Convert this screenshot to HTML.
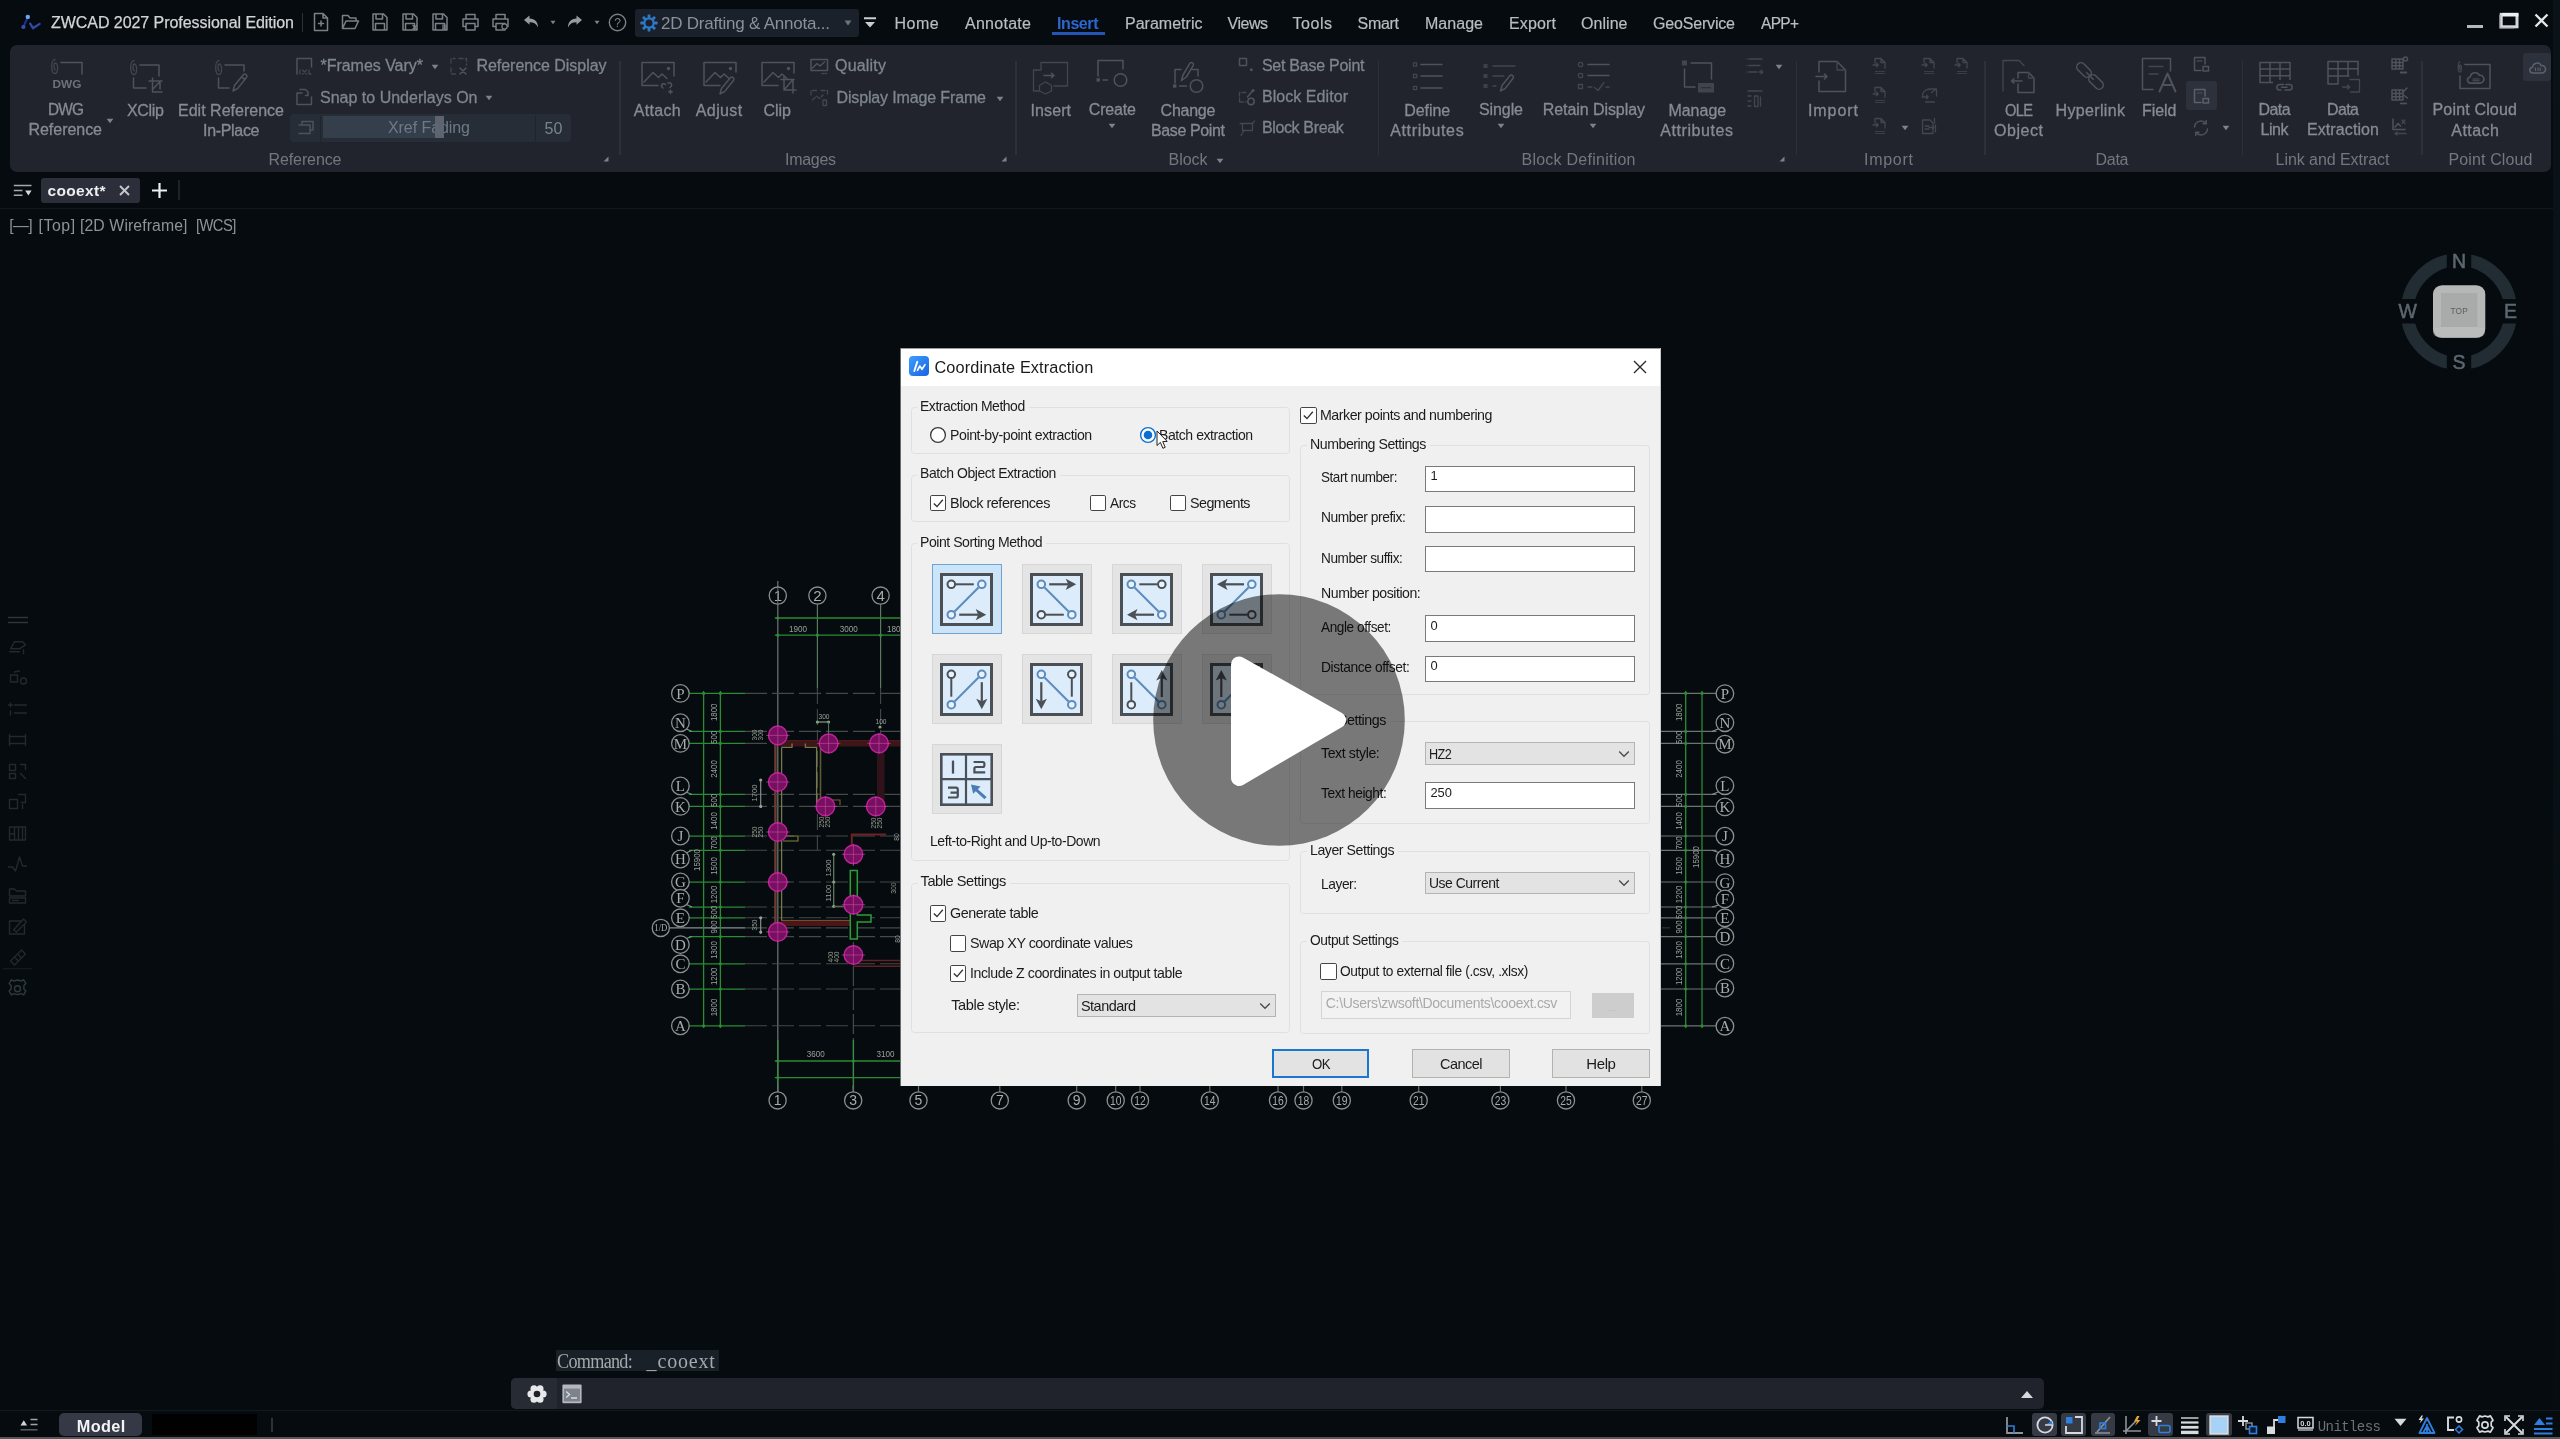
<!DOCTYPE html>
<html><head><meta charset="utf-8"><title>ZWCAD</title>
<style>
html,body{margin:0;padding:0;background:#050b0e;}
body{width:2560px;height:1439px;background:#050b0e;position:relative;overflow:hidden;font-family:"Liberation Sans",sans-serif;}
.t{position:absolute;white-space:pre;}
.b{position:absolute;}
svg{overflow:visible;}
#all{position:absolute;left:0;top:0;width:2560px;height:1439px;filter:blur(.4px);}
</style></head><body><div id="all">
<svg class="b" style="left:20.00px;top:12.00px;" width="22" height="22" viewBox="0 0 22 22"><path d="M7.3 6.2 L3.9 13.8" stroke="#1f2e90" stroke-width="2.1" fill="none" stroke-linecap="round"/><circle cx="3.4" cy="15" r="2.1" fill="#3c4db0"/><path d="M10.2 11.6 L13 16.2 L19.6 11.9" stroke="#3447aa" stroke-width="2.3" fill="none" stroke-linecap="round" stroke-linejoin="round"/><circle cx="7.8" cy="4.9" r="2.2" fill="#6ea8ea"/></svg>
<span class="t" style="left:51.00px;top:15.48px;font-size:16.00px;line-height:1;color:#d2d4d6;letter-spacing:-0.052px;-webkit-text-stroke-width:.25px;">ZWCAD 2027 Professional Edition</span>
<div class="b" style="left:301.50px;top:13.00px;width:1.20px;height:19.00px;background:#2c3136;"></div>
<svg class="b" style="left:312.00px;top:12.00px;" width="18" height="20" viewBox="0 0 18 20"><path d="M2.5 1.5 H11 L15.5 6 V18.5 H2.5 Z M11 1.5 V6 H15.5" fill="none" stroke="#7b8087" stroke-width="1.5" stroke-linejoin="round" stroke-linecap="round"/><path d="M9 9 V14 M6.5 11.5 H11.5" fill="none" stroke="#7b8087" stroke-width="1.5" stroke-linejoin="round" stroke-linecap="round"/></svg>
<svg class="b" style="left:340.50px;top:12.00px;" width="19" height="20" viewBox="0 0 19 20"><path d="M1.5 16.5 V3.5 H7 L9 6 H15 V9 M1.5 16.5 L5 9 H17.5 L14 16.5 Z" fill="none" stroke="#7b8087" stroke-width="1.5" stroke-linejoin="round" stroke-linecap="round"/></svg>
<svg class="b" style="left:371.00px;top:12.00px;" width="18" height="20" viewBox="0 0 18 20"><path d="M2 2 H12.5 L16 5.5 V18 H2 Z M5 2 V7 H11.5 V2 M4.5 18 V11.5 H13.5 V18" fill="none" stroke="#7b8087" stroke-width="1.5" stroke-linejoin="round" stroke-linecap="round"/></svg>
<svg class="b" style="left:401.00px;top:12.00px;" width="18" height="20" viewBox="0 0 18 20"><path d="M2 2 H12.5 L16 5.5 V18 H2 Z M5 2 V7 H11.5 V2 M4.5 18 V11.5 H13.5 V18" fill="none" stroke="#7b8087" stroke-width="1.5" stroke-linejoin="round" stroke-linecap="round"/><path d="M11.5 13 l4.5 4.5 M16 13 l-4.5 4.5" stroke="#7b8087" stroke-width="1.3"/></svg>
<svg class="b" style="left:431.00px;top:12.00px;" width="18" height="20" viewBox="0 0 18 20"><path d="M2 2 H12.5 L16 5.5 V18 H2 Z M5 2 V7 H11.5 V2 M4.5 18 V11.5 H13.5 V18" fill="none" stroke="#7b8087" stroke-width="1.5" stroke-linejoin="round" stroke-linecap="round"/><path d="M12 12.5 v5.5 M15 12.5 v5.5" stroke="#7b8087" stroke-width="1.3"/></svg>
<svg class="b" style="left:460.50px;top:12.00px;" width="19" height="20" viewBox="0 0 19 20"><path d="M5 7 V2.5 H14 V7 M5 14.5 H2 V7 H17 V14.5 H14 M5 11.5 H14 V18 H5 Z" fill="none" stroke="#7b8087" stroke-width="1.5" stroke-linejoin="round" stroke-linecap="round"/></svg>
<svg class="b" style="left:490.50px;top:12.00px;" width="19" height="20" viewBox="0 0 19 20"><path d="M5 7 V2.5 H14 V7 M5 14.5 H2 V7 H17 V14.5 H14 M5 11.5 H14 V18 H5 Z" fill="none" stroke="#7b8087" stroke-width="1.5" stroke-linejoin="round" stroke-linecap="round"/><circle cx="13.5" cy="14.5" r="2.6" fill="#050b0e" stroke="#7b8087" stroke-width="1.2"/></svg>
<svg class="b" style="left:522.00px;top:12.00px;" width="18" height="20" viewBox="0 0 18 20"><path d="M2 8 L7.5 3.5 V6.5 C13 6.5 16 10 16 15.5 C14.5 12 12 10.3 7.5 10.3 V12.8 Z" fill="#959aa0"/></svg>
<svg class="b" style="left:550.00px;top:20.00px;" width="6" height="5" viewBox="0 0 6 5"><path d="M.5 .8 H5.5 L3 4.2 Z" fill="#7d838a"/></svg>
<svg class="b" style="left:566.00px;top:12.00px;" width="18" height="20" viewBox="0 0 18 20"><path d="M16 8 L10.5 3.5 V6.5 C5 6.5 2 10 2 15.5 C3.5 12 6 10.3 10.5 10.3 V12.8 Z" fill="#959aa0"/></svg>
<svg class="b" style="left:594.00px;top:20.00px;" width="6" height="5" viewBox="0 0 6 5"><path d="M.5 .8 H5.5 L3 4.2 Z" fill="#7d838a"/></svg>
<svg class="b" style="left:608.00px;top:13.00px;" width="19" height="19" viewBox="0 0 19 19"><circle cx="9.5" cy="9.5" r="8.2" fill="none" stroke="#7b8087" stroke-width="1.4"/><text x="9.5" y="14" font-family="Liberation Sans" font-size="12" text-anchor="middle" fill="#7b8087">?</text></svg>
<div class="b" style="left:635.00px;top:9.00px;width:224.00px;height:28.00px;background:#1a212a;border-radius:3px;"></div>
<svg class="b" style="left:640.00px;top:14.00px;" width="18" height="18" viewBox="0 0 18 18"><g transform="translate(9 9)"><rect x="-1.4" y="-8.6" width="2.8" height="4" rx=".6" fill="#2f78c8" transform="rotate(0)"/><rect x="-1.4" y="-8.6" width="2.8" height="4" rx=".6" fill="#2f78c8" transform="rotate(45)"/><rect x="-1.4" y="-8.6" width="2.8" height="4" rx=".6" fill="#2f78c8" transform="rotate(90)"/><rect x="-1.4" y="-8.6" width="2.8" height="4" rx=".6" fill="#2f78c8" transform="rotate(135)"/><rect x="-1.4" y="-8.6" width="2.8" height="4" rx=".6" fill="#2f78c8" transform="rotate(180)"/><rect x="-1.4" y="-8.6" width="2.8" height="4" rx=".6" fill="#2f78c8" transform="rotate(225)"/><rect x="-1.4" y="-8.6" width="2.8" height="4" rx=".6" fill="#2f78c8" transform="rotate(270)"/><rect x="-1.4" y="-8.6" width="2.8" height="4" rx=".6" fill="#2f78c8" transform="rotate(315)"/><circle r="4.6" fill="none" stroke="#2f78c8" stroke-width="2.1"/></g></svg>
<span class="t" style="left:661.00px;top:15.40px;font-size:17.00px;line-height:1;color:#8a9199;letter-spacing:-0.222px;">2D Drafting &amp; Annota...</span>
<svg class="b" style="left:843.00px;top:19.00px;" width="10" height="8" viewBox="0 0 10 8"><path d="M1.5 1.5 L8.5 1.5 L5 6.5 Z" fill="#6d747c"/></svg>
<svg class="b" style="left:863.00px;top:15.00px;" width="14" height="14" viewBox="0 0 14 14"><path d="M1 3.2 H13 M1 3.2 H13" stroke="#c9cdd1" stroke-width="2"/><path d="M2 7 H12 L7 12.5 Z" fill="#c9cdd1"/></svg>
<span class="t" style="left:894.50px;top:15.58px;font-size:16.00px;line-height:1;color:#b9bdc1;letter-spacing:0.504px;-webkit-text-stroke-width:.2px;">Home</span>
<span class="t" style="left:965.00px;top:15.58px;font-size:16.00px;line-height:1;color:#b9bdc1;letter-spacing:0.277px;-webkit-text-stroke-width:.2px;">Annotate</span>
<span class="t" style="left:1125.00px;top:15.58px;font-size:16.00px;line-height:1;color:#b9bdc1;letter-spacing:0.016px;-webkit-text-stroke-width:.2px;">Parametric</span>
<span class="t" style="left:1227.50px;top:15.58px;font-size:16.00px;line-height:1;color:#b9bdc1;letter-spacing:-0.473px;-webkit-text-stroke-width:.2px;">Views</span>
<span class="t" style="left:1292.50px;top:15.58px;font-size:16.00px;line-height:1;color:#b9bdc1;letter-spacing:0.535px;-webkit-text-stroke-width:.2px;">Tools</span>
<span class="t" style="left:1357.50px;top:15.58px;font-size:16.00px;line-height:1;color:#b9bdc1;letter-spacing:-0.293px;-webkit-text-stroke-width:.2px;">Smart</span>
<span class="t" style="left:1425.00px;top:15.58px;font-size:16.00px;line-height:1;color:#b9bdc1;letter-spacing:0.034px;-webkit-text-stroke-width:.2px;">Manage</span>
<span class="t" style="left:1509.00px;top:15.58px;font-size:16.00px;line-height:1;color:#b9bdc1;letter-spacing:0.150px;-webkit-text-stroke-width:.2px;">Export</span>
<span class="t" style="left:1581.00px;top:15.58px;font-size:16.00px;line-height:1;color:#b9bdc1;letter-spacing:0.050px;-webkit-text-stroke-width:.2px;">Online</span>
<span class="t" style="left:1653.00px;top:15.58px;font-size:16.00px;line-height:1;color:#b9bdc1;letter-spacing:-0.177px;-webkit-text-stroke-width:.2px;">GeoService</span>
<span class="t" style="left:1761.00px;top:15.58px;font-size:16.00px;line-height:1;color:#b9bdc1;letter-spacing:-0.724px;transform-origin:left center;transform:scaleX(0.9697);-webkit-text-stroke-width:.2px;">APP+</span>
<span class="t" style="left:1057.00px;top:15.58px;font-size:16.00px;line-height:1;color:#2c67cf;font-weight:700;letter-spacing:-0.416px;">Insert</span>
<div class="b" style="left:1052.00px;top:32.40px;width:52.50px;height:2.30px;background:#2455b6;"></div>
<div class="b" style="left:2467.30px;top:25.20px;width:15.60px;height:2.70px;background:#b4b8bb;"></div>
<svg class="b" style="left:2499.00px;top:11.50px;" width="20" height="17" viewBox="0 0 20 17"><rect x="2.2" y="2.4" width="15.8" height="12.4" fill="none" stroke="#d6d9db" stroke-width="3"/><rect x="3.4" y=".9" width="16" height="3.6" fill="#eef0f1"/><path d="M.9 3 V16 H15" stroke="#9da2a6" stroke-width="1.2" fill="none"/></svg>
<svg class="b" style="left:2534.00px;top:13.00px;" width="15" height="15" viewBox="0 0 15 15"><path d="M1.5 1.5 L13.5 13.5 M13.5 1.5 L1.5 13.5" stroke="#e4e6e8" stroke-width="2.3"/></svg>
<div class="b" style="left:10.00px;top:44.50px;width:2541.00px;height:127.00px;background:#21242c;border-radius:7px;"></div>
<svg class="b" style="left:50.00px;top:58.00px;" width="34" height="34" viewBox="0 0 34 34"><path d="M5 1.5 C.6 1.5 .6 15.5 5 15.5 C8.4 15.5 8.4 5 5.4 5 C3.6 5 3.6 11.8 5.4 11.8" fill="none" stroke="#41464f" stroke-width="1.3" stroke-linejoin="round" stroke-linecap="round"/><path d="M11 4.5 H32 V16" fill="none" stroke="#4d525b" stroke-width="1.5" stroke-linejoin="round" stroke-linecap="round"/><text x="17" y="30" font-family="Liberation Sans" font-weight="700" font-size="11.5" text-anchor="middle" fill="#6d727a" textLength="29" lengthAdjust="spacingAndGlyphs">DWG</text></svg>
<span class="t" style="left:47.50px;top:101.98px;font-size:16.00px;line-height:1;color:#868b92;letter-spacing:-0.913px;transform-origin:left center;transform:scaleX(0.9656);-webkit-text-stroke-width:.3px;">DWG</span>
<span class="t" style="left:28.50px;top:122.38px;font-size:16.00px;line-height:1;color:#868b92;letter-spacing:-0.041px;-webkit-text-stroke-width:.3px;">Reference</span>
<svg class="b" style="left:105.80px;top:118.00px;" width="8" height="6" viewBox="0 0 8 6"><path d="M.6 .8 H7.4 L4 5.2 Z" fill="#7d838b"/></svg>
<svg class="b" style="left:129.00px;top:59.00px;" width="34" height="36" viewBox="0 0 34 36"><path d="M5 1.5 C.6 1.5 .6 15.5 5 15.5 C8.4 15.5 8.4 5 5.4 5 C3.6 5 3.6 11.8 5.4 11.8" fill="none" stroke="#41464f" stroke-width="1.3" stroke-linejoin="round" stroke-linecap="round"/><path d="M11 6 H30 V17 M4.5 19 V29 H17" fill="none" stroke="#4d525b" stroke-width="1.5" stroke-linejoin="round" stroke-linecap="round"/><path d="M20 22 H33 M23.5 19 V33 H33 M31 22 V30 M23.5 30.5 L31 22.5" fill="none" stroke="#4d525b" stroke-width="1.5" stroke-linejoin="round" stroke-linecap="round"/></svg>
<span class="t" style="left:127.00px;top:102.78px;font-size:16.00px;line-height:1;color:#868b92;letter-spacing:-0.309px;-webkit-text-stroke-width:.3px;">XClip</span>
<svg class="b" style="left:214.00px;top:59.00px;" width="35" height="36" viewBox="0 0 35 36"><path d="M5 1.5 C.6 1.5 .6 15.5 5 15.5 C8.4 15.5 8.4 5 5.4 5 C3.6 5 3.6 11.8 5.4 11.8" fill="none" stroke="#41464f" stroke-width="1.3" stroke-linejoin="round" stroke-linecap="round"/><path d="M11 6 H30 V12 M4.5 19 V29 H15" fill="none" stroke="#4d525b" stroke-width="1.5" stroke-linejoin="round" stroke-linecap="round"/><path d="M19 32 L20.5 26.5 L29.5 15.5 C31 14 34 16.5 32.6 18.2 L23.8 29.4 Z M27.6 17.8 L30.8 20.4" fill="none" stroke="#4d525b" stroke-width="1.5" stroke-linejoin="round" stroke-linecap="round"/></svg>
<span class="t" style="left:178.00px;top:102.78px;font-size:16.00px;line-height:1;color:#868b92;letter-spacing:0.012px;-webkit-text-stroke-width:.3px;">Edit Reference</span>
<span class="t" style="left:203.00px;top:123.18px;font-size:16.00px;line-height:1;color:#868b92;letter-spacing:-0.315px;-webkit-text-stroke-width:.3px;">In-Place</span>
<svg class="b" style="left:296.00px;top:57.00px;" width="17" height="19" viewBox="0 0 17 19"><path d="M1 17 V1.5 H15.5 V10" fill="none" stroke="#4d525b" stroke-width="1.5" stroke-linejoin="round" stroke-linecap="round"/><path d="M4 13 v4 M6.5 13 l4 4 M10.5 13 l-4 4 M13 13 v4 h2" fill="none" stroke="#41464f" stroke-width="1.3" stroke-linejoin="round" stroke-linecap="round"/></svg>
<span class="t" style="left:320.50px;top:58.48px;font-size:16.00px;line-height:1;color:#7e858d;letter-spacing:-0.029px;-webkit-text-stroke-width:.3px;">*Frames Vary*</span>
<svg class="b" style="left:431.00px;top:64.00px;" width="8" height="6" viewBox="0 0 8 6"><path d="M.6 .8 H7.4 L4 5.2 Z" fill="#7d838b"/></svg>
<svg class="b" style="left:450.00px;top:57.00px;" width="18" height="19" viewBox="0 0 18 19"><path d="M1 6 V1.5 H5 M9 1.5 H16.5 V8 M1 11 V17 H7" stroke-dasharray="4 2.5" fill="none" stroke="#41464f" stroke-width="1.3" stroke-linejoin="round" stroke-linecap="round"/><path d="M10 11 l6 6 M16 11 l-6 6" fill="none" stroke="#4d525b" stroke-width="1.5" stroke-linejoin="round" stroke-linecap="round"/></svg>
<span class="t" style="left:476.50px;top:57.98px;font-size:16.00px;line-height:1;color:#7e858d;letter-spacing:-0.046px;-webkit-text-stroke-width:.3px;">Reference Display</span>
<svg class="b" style="left:296.00px;top:88.00px;" width="17" height="18" viewBox="0 0 17 18"><path d="M1 5 V16.5 H15.5 V9 M1 5 H6 M4 1.5 H9.5 L12 4 V7.5 H9.5" fill="none" stroke="#4d525b" stroke-width="1.5" stroke-linejoin="round" stroke-linecap="round"/></svg>
<span class="t" style="left:320.00px;top:89.98px;font-size:16.00px;line-height:1;color:#7e858d;letter-spacing:0.004px;-webkit-text-stroke-width:.3px;">Snap to Underlays On</span>
<svg class="b" style="left:485.00px;top:95.00px;" width="8" height="6" viewBox="0 0 8 6"><path d="M.6 .8 H7.4 L4 5.2 Z" fill="#7d838b"/></svg>
<div class="b" style="left:290.30px;top:113.80px;width:280.70px;height:28.40px;background:#272d37;border-radius:4px;"></div>
<div class="b" style="left:323.00px;top:115.80px;width:111.50px;height:22.50px;background:#353e4b;"></div>
<div class="b" style="left:434.50px;top:116.30px;width:9.50px;height:22.00px;background:#5d6470;border-radius:1px;"></div>
<div class="b" style="left:320.00px;top:114.50px;width:1.00px;height:27.00px;background:#20252d;"></div>
<div class="b" style="left:534.60px;top:114.50px;width:1.00px;height:27.00px;background:#20252d;"></div>
<svg class="b" style="left:298.00px;top:120.00px;" width="16" height="15" viewBox="0 0 16 15"><path d="M4 3.5 V1.5 H15 V10 H13 M1 5 H12 V13.5 H1" fill="none" stroke="#4d525b" stroke-width="1.5" stroke-linejoin="round" stroke-linecap="round"/></svg>
<span class="t" style="left:388.00px;top:120.38px;font-size:16.00px;line-height:1;color:#6d7a88;letter-spacing:-0.072px;">Xref Fading</span>
<span class="t" style="left:544.60px;top:120.58px;font-size:16.00px;line-height:1;color:#7a838d;letter-spacing:-0.097px;">50</span>
<div class="b" style="left:434.50px;top:116.30px;width:9.50px;height:22.00px;background:rgba(93,100,112,.85);border-radius:1px;"></div>
<span class="t" style="left:268.50px;top:151.78px;font-size:16.00px;line-height:1;color:#73787f;letter-spacing:-0.104px;">Reference</span>
<svg class="b" style="left:603.00px;top:156.00px;" width="6" height="6" viewBox="0 0 6 6"><path d="M5.5 .5 V5.5 H.5 Z" fill="#7d838b"/></svg>
<div class="b" style="left:619.40px;top:61.00px;width:1.30px;height:94.00px;background:#2c3038;"></div>
<svg class="b" style="left:641.00px;top:61.00px;" width="36" height="32" viewBox="0 0 36 32"><path d="M1 1.5 H33 V15 M1 1.5 V24.5 H17 M3 21 L12 11.5 L17.5 16.5 L21 13 L26 17.5" fill="none" stroke="#4d525b" stroke-width="1.5" stroke-linejoin="round" stroke-linecap="round"/><circle cx="27.5" cy="7.5" r="1.7" fill="#4d525b"/><path d="M24.5 23.5 C21 21 19 25 22 27 M27 22 C30.5 21 32 24.5 29 26.5 M29.5 29 v3.5 M27.7 30.7 h3.6" fill="none" stroke="#4d525b" stroke-width="1.5" stroke-linejoin="round" stroke-linecap="round"/></svg>
<span class="t" style="left:633.80px;top:102.78px;font-size:16.00px;line-height:1;color:#868b92;letter-spacing:0.288px;-webkit-text-stroke-width:.3px;">Attach</span>
<svg class="b" style="left:702.50px;top:61.00px;" width="36" height="34" viewBox="0 0 36 34"><path d="M1 1.5 H33 V11 M1 1.5 V24.5 H17 M3 21 L12 11.5 L17.5 16.5 L21 13 L26 17.5" fill="none" stroke="#4d525b" stroke-width="1.5" stroke-linejoin="round" stroke-linecap="round"/><circle cx="27.5" cy="7.5" r="1.7" fill="#4d525b"/><path d="M17 33 L18.5 27.5 L27.5 16.5 C29 15 32 17.5 30.6 19.2 L21.8 30.4 Z" fill="none" stroke="#4d525b" stroke-width="1.5" stroke-linejoin="round" stroke-linecap="round"/></svg>
<span class="t" style="left:695.80px;top:102.78px;font-size:16.00px;line-height:1;color:#868b92;letter-spacing:0.386px;-webkit-text-stroke-width:.3px;">Adjust</span>
<svg class="b" style="left:761.00px;top:61.00px;" width="36" height="34" viewBox="0 0 36 34"><path d="M1 1.5 H33 V12 M1 1.5 V24.5 H17 M3 21 L12 11.5 L17.5 16.5 L21 13 L26 17.5" fill="none" stroke="#4d525b" stroke-width="1.5" stroke-linejoin="round" stroke-linecap="round"/><circle cx="27.5" cy="7.5" r="1.7" fill="#4d525b"/><path d="M20 18.5 H33 M23 15.5 V29 H35 M32 18.5 V32 M23.5 28.5 L31.5 19" fill="none" stroke="#4d525b" stroke-width="1.5" stroke-linejoin="round" stroke-linecap="round"/></svg>
<span class="t" style="left:763.40px;top:102.78px;font-size:16.00px;line-height:1;color:#868b92;letter-spacing:0.013px;-webkit-text-stroke-width:.3px;">Clip</span>
<svg class="b" style="left:810.00px;top:57.50px;" width="19" height="18" viewBox="0 0 19 18"><path d="M1 1.5 H17.5 V12.5 H1 Z M2.5 10 L7 5.5 L10 8 L14.5 4" fill="none" stroke="#4d525b" stroke-width="1.5" stroke-linejoin="round" stroke-linecap="round"/><path d="M12 15.5 h5" stroke-dasharray="1.5 1.5" fill="none" stroke="#41464f" stroke-width="1.3" stroke-linejoin="round" stroke-linecap="round"/></svg>
<span class="t" style="left:835.00px;top:58.48px;font-size:16.00px;line-height:1;color:#7e858d;letter-spacing:0.201px;-webkit-text-stroke-width:.3px;">Quality</span>
<svg class="b" style="left:810.00px;top:88.50px;" width="19" height="19" viewBox="0 0 19 19"><path d="M1 6 V1.5 H7 M11 1.5 H17.5 V5 M2.5 11 L6.5 7 L9.5 9.5 L13 6" stroke-dasharray="4 2" fill="none" stroke="#41464f" stroke-width="1.3" stroke-linejoin="round" stroke-linecap="round"/><path d="M13 11 v5.5 h3.5 v-5.5 Z" fill="none" stroke="#41464f" stroke-width="1.3" stroke-linejoin="round" stroke-linecap="round"/></svg>
<span class="t" style="left:836.50px;top:89.98px;font-size:16.00px;line-height:1;color:#7e858d;letter-spacing:-0.141px;-webkit-text-stroke-width:.3px;">Display Image Frame</span>
<svg class="b" style="left:996.00px;top:95.50px;" width="8" height="6" viewBox="0 0 8 6"><path d="M.6 .8 H7.4 L4 5.2 Z" fill="#7d838b"/></svg>
<span class="t" style="left:785.00px;top:151.78px;font-size:16.00px;line-height:1;color:#73787f;letter-spacing:-0.294px;">Images</span>
<svg class="b" style="left:1000.50px;top:156.00px;" width="6" height="6" viewBox="0 0 6 6"><path d="M5.5 .5 V5.5 H.5 Z" fill="#7d838b"/></svg>
<div class="b" style="left:1015.40px;top:61.00px;width:1.30px;height:94.00px;background:#2c3038;"></div>
<svg class="b" style="left:1032.00px;top:61.00px;" width="38" height="34" viewBox="0 0 38 34"><path d="M9 9 V1.5 H35.5 V25 H22 M9 9 H1.5 V30 H7" fill="none" stroke="#41464f" stroke-width="1.3" stroke-linejoin="round" stroke-linecap="round"/><path d="M12 14.5 H22 M19.5 12.3 L22 14.5 L19.5 16.7" fill="none" stroke="#4d525b" stroke-width="1.5" stroke-linejoin="round" stroke-linecap="round"/><path d="M13.5 21 L19.5 24.5 V30 L13.5 33 L7.5 30 V24.5 Z" fill="none" stroke="#41464f" stroke-width="1.3" stroke-linejoin="round" stroke-linecap="round"/></svg>
<span class="t" style="left:1030.60px;top:102.78px;font-size:16.00px;line-height:1;color:#868b92;letter-spacing:0.077px;-webkit-text-stroke-width:.3px;">Insert</span>
<svg class="b" style="left:1095.00px;top:59.00px;" width="36" height="30" viewBox="0 0 36 30"><path d="M3 17 V1.5 H28 V10" fill="none" stroke="#4d525b" stroke-width="1.5" stroke-linejoin="round" stroke-linecap="round"/><circle cx="25.5" cy="21" r="6.3" fill="none" stroke="#4d525b" stroke-width="1.5" stroke-linejoin="round" stroke-linecap="round"/><rect x="1.5" y="19.2" width="3.4" height="3.4" fill="#4d525b"/><path d="M8 21 h4.5" fill="none" stroke="#4d525b" stroke-width="1.5" stroke-linejoin="round" stroke-linecap="round"/></svg>
<span class="t" style="left:1088.80px;top:102.08px;font-size:16.00px;line-height:1;color:#868b92;letter-spacing:-0.166px;-webkit-text-stroke-width:.3px;">Create</span>
<svg class="b" style="left:1108.00px;top:122.80px;" width="8" height="6" viewBox="0 0 8 6"><path d="M.6 .8 H7.4 L4 5.2 Z" fill="#7d838b"/></svg>
<svg class="b" style="left:1171.00px;top:59.00px;" width="36" height="35" viewBox="0 0 36 35"><path d="M4 24 V10.5 H10 M21 10.5 H27 V17" fill="none" stroke="#4d525b" stroke-width="1.5" stroke-linejoin="round" stroke-linecap="round"/><circle cx="25.5" cy="27" r="6.3" fill="none" stroke="#4d525b" stroke-width="1.5" stroke-linejoin="round" stroke-linecap="round"/><rect x="2" y="25.3" width="3.4" height="3.4" fill="#4d525b"/><path d="M8.5 27 h7" fill="none" stroke="#4d525b" stroke-width="1.5" stroke-linejoin="round" stroke-linecap="round"/><path d="M10.5 21.5 L12 16 L19 4.2 C20.2 2.6 23.3 4.5 22.3 6.3 L15.4 18 Z" fill="none" stroke="#4d525b" stroke-width="1.5" stroke-linejoin="round" stroke-linecap="round"/></svg>
<span class="t" style="left:1160.60px;top:102.98px;font-size:16.00px;line-height:1;color:#868b92;letter-spacing:-0.269px;-webkit-text-stroke-width:.3px;">Change</span>
<span class="t" style="left:1151.00px;top:122.88px;font-size:16.00px;line-height:1;color:#868b92;letter-spacing:-0.377px;-webkit-text-stroke-width:.3px;">Base Point</span>
<svg class="b" style="left:1238.00px;top:57.00px;" width="17" height="16" viewBox="0 0 17 16"><rect x="1.5" y="1.5" width="7" height="7" fill="none" stroke="#4d525b" stroke-width="1.5" stroke-linejoin="round" stroke-linecap="round"/><rect x="12" y="11.5" width="2.6" height="2.6" fill="#4d525b"/></svg>
<span class="t" style="left:1261.90px;top:58.18px;font-size:16.00px;line-height:1;color:#7e858d;letter-spacing:-0.250px;-webkit-text-stroke-width:.3px;">Set Base Point</span>
<svg class="b" style="left:1238.00px;top:87.50px;" width="18" height="18" viewBox="0 0 18 18"><path d="M1.5 14 V4.5 H9 M1.5 14 H8" stroke-dasharray="4 2" fill="none" stroke="#41464f" stroke-width="1.3" stroke-linejoin="round" stroke-linecap="round"/><circle cx="13" cy="13.5" r="3.2" fill="none" stroke="#4d525b" stroke-width="1.5" stroke-linejoin="round" stroke-linecap="round"/><path d="M9.5 9 L14.5 3" fill="none" stroke="#4d525b" stroke-width="1.5" stroke-linejoin="round" stroke-linecap="round"/><circle cx="15" cy="2.6" r="1.5" fill="#4d525b"/></svg>
<span class="t" style="left:1261.90px;top:88.98px;font-size:16.00px;line-height:1;color:#7e858d;letter-spacing:0.066px;-webkit-text-stroke-width:.3px;">Block Editor</span>
<svg class="b" style="left:1239.00px;top:118.50px;" width="17" height="18" viewBox="0 0 17 18"><path d="M3.5 4.5 H13.5 V11.5 H3.5 Z M1 4.5 h2.5 M13.5 4.5 l2 -2.5 M5 11.5 l-3 5" fill="none" stroke="#41464f" stroke-width="1.3" stroke-linejoin="round" stroke-linecap="round"/></svg>
<span class="t" style="left:1261.90px;top:120.18px;font-size:16.00px;line-height:1;color:#7e858d;letter-spacing:-0.348px;-webkit-text-stroke-width:.3px;">Block Break</span>
<span class="t" style="left:1168.50px;top:151.78px;font-size:16.00px;line-height:1;color:#73787f;letter-spacing:-0.031px;">Block</span>
<svg class="b" style="left:1216.00px;top:157.80px;" width="8" height="6" viewBox="0 0 8 6"><path d="M.6 .8 H7.4 L4 5.2 Z" fill="#7d838b"/></svg>
<div class="b" style="left:1378.00px;top:61.00px;width:1.30px;height:94.00px;background:#2c3038;"></div>
<svg class="b" style="left:1412.00px;top:60.00px;" width="34" height="31" viewBox="0 0 34 31"><rect x="1.5" y="2.9" width="3.2" height="3.2" fill="none" stroke="#41464f" stroke-width="1.3" stroke-linejoin="round" stroke-linecap="round"/><path d="M9 4.5 H30" fill="none" stroke="#4d525b" stroke-width="1.5" stroke-linejoin="round" stroke-linecap="round"/><rect x="1.5" y="14.4" width="3.2" height="3.2" fill="none" stroke="#41464f" stroke-width="1.3" stroke-linejoin="round" stroke-linecap="round"/><path d="M9 16 H30" fill="none" stroke="#4d525b" stroke-width="1.5" stroke-linejoin="round" stroke-linecap="round"/><rect x="1.5" y="26.4" width="3.2" height="3.2" fill="none" stroke="#41464f" stroke-width="1.3" stroke-linejoin="round" stroke-linecap="round"/><path d="M9 28 H30" fill="none" stroke="#4d525b" stroke-width="1.5" stroke-linejoin="round" stroke-linecap="round"/></svg>
<span class="t" style="left:1404.30px;top:103.38px;font-size:16.00px;line-height:1;color:#868b92;letter-spacing:-0.070px;-webkit-text-stroke-width:.3px;">Define</span>
<span class="t" style="left:1390.20px;top:123.18px;font-size:16.00px;line-height:1;color:#868b92;letter-spacing:0.656px;-webkit-text-stroke-width:.3px;">Attributes</span>
<svg class="b" style="left:1482.00px;top:60.00px;" width="38" height="33" viewBox="0 0 38 33"><rect x="1.5" y="4" width="4" height="4" fill="#3c414a"/><rect x="1.5" y="14" width="4" height="4" fill="#3c414a"/><rect x="1.5" y="24" width="4" height="4" fill="#3c414a"/><path d="M11 6 H33 M11 16 H22 M11 26 h3" fill="none" stroke="#41464f" stroke-width="1.3" stroke-linejoin="round" stroke-linecap="round"/><path d="M18.5 31 L20 25.5 L28 15.5 C29.5 14 32.5 16.5 31.1 18.2 L23.3 28.4 Z" fill="none" stroke="#4d525b" stroke-width="1.5" stroke-linejoin="round" stroke-linecap="round"/></svg>
<span class="t" style="left:1479.00px;top:102.18px;font-size:16.00px;line-height:1;color:#868b92;letter-spacing:-0.097px;-webkit-text-stroke-width:.3px;">Single</span>
<svg class="b" style="left:1496.60px;top:122.50px;" width="8" height="6" viewBox="0 0 8 6"><path d="M.6 .8 H7.4 L4 5.2 Z" fill="#7d838b"/></svg>
<svg class="b" style="left:1577.00px;top:60.00px;" width="36" height="31" viewBox="0 0 36 31"><circle cx="3.5" cy="4.5" r="2.2" fill="none" stroke="#41464f" stroke-width="1.3" stroke-linejoin="round" stroke-linecap="round"/><circle cx="3.5" cy="15.5" r="2.2" fill="none" stroke="#41464f" stroke-width="1.3" stroke-linejoin="round" stroke-linecap="round"/><rect x="1.5" y="24.5" width="4" height="4" fill="none" stroke="#41464f" stroke-width="1.3" stroke-linejoin="round" stroke-linecap="round"/><path d="M11 4.5 H32 M11 15.5 H32" fill="none" stroke="#4d525b" stroke-width="1.5" stroke-linejoin="round" stroke-linecap="round"/><path d="M11 27 h4 M17.5 27.5 L21 30.5 L27 22.5 M29 27 h3" fill="none" stroke="#41464f" stroke-width="1.3" stroke-linejoin="round" stroke-linecap="round"/></svg>
<span class="t" style="left:1542.80px;top:102.18px;font-size:16.00px;line-height:1;color:#868b92;letter-spacing:-0.074px;-webkit-text-stroke-width:.3px;">Retain Display</span>
<svg class="b" style="left:1589.30px;top:122.50px;" width="8" height="6" viewBox="0 0 8 6"><path d="M.6 .8 H7.4 L4 5.2 Z" fill="#7d838b"/></svg>
<svg class="b" style="left:1681.00px;top:59.00px;" width="35" height="35" viewBox="0 0 35 35"><rect x="1" y="1.5" width="5" height="5" fill="#41464f"/><path d="M10 4 H30.5 V20 M3.5 10 V28 H14" fill="none" stroke="#4d525b" stroke-width="1.5" stroke-linejoin="round" stroke-linecap="round"/><rect x="17" y="24" width="16" height="9.5" fill="#3f444d"/><path d="M20 28.7 h10" stroke="#2a2e36" stroke-width="1.2"/></svg>
<span class="t" style="left:1668.40px;top:103.38px;font-size:16.00px;line-height:1;color:#868b92;letter-spacing:-0.006px;-webkit-text-stroke-width:.3px;">Manage</span>
<span class="t" style="left:1660.20px;top:123.18px;font-size:16.00px;line-height:1;color:#868b92;letter-spacing:0.578px;-webkit-text-stroke-width:.3px;">Attributes</span>
<svg class="b" style="left:1746.00px;top:57.00px;" width="18" height="18" viewBox="0 0 18 18"><path d="M3 2 H16 M3 8.5 H14 M3 15 H11 M13 15 h3.5 M15 13.3 L16.8 15 L15 16.7" fill="none" stroke="#41464f" stroke-width="1.3" stroke-linejoin="round" stroke-linecap="round"/><path d="M1 2 h.1 M1 8.5 h.1 M1 15 h.1" fill="none" stroke="#41464f" stroke-width="1.3" stroke-linejoin="round" stroke-linecap="round"/></svg>
<svg class="b" style="left:1774.70px;top:63.50px;" width="8" height="6" viewBox="0 0 8 6"><path d="M.6 .8 H7.4 L4 5.2 Z" fill="#7d838b"/></svg>
<svg class="b" style="left:1746.00px;top:89.00px;" width="18" height="19" viewBox="0 0 18 19"><path d="M2 2 H16 M2 7 h3 M2 12 h3 M2 17 h3" fill="none" stroke="#41464f" stroke-width="1.3" stroke-linejoin="round" stroke-linecap="round"/><path d="M8.5 7 h3.5 v10.5 h-3.5 Z M14.5 8 v9" fill="none" stroke="#41464f" stroke-width="1.3" stroke-linejoin="round" stroke-linecap="round"/></svg>
<span class="t" style="left:1521.50px;top:151.78px;font-size:16.00px;line-height:1;color:#73787f;letter-spacing:0.248px;">Block Definition</span>
<svg class="b" style="left:1778.50px;top:156.00px;" width="6" height="6" viewBox="0 0 6 6"><path d="M5.5 .5 V5.5 H.5 Z" fill="#7d838b"/></svg>
<div class="b" style="left:1796.10px;top:61.00px;width:1.30px;height:94.00px;background:#2c3038;"></div>
<svg class="b" style="left:1815.00px;top:60.00px;" width="34" height="34" viewBox="0 0 34 34"><path d="M4 12 V1.5 H22 L30.5 10 V31.5 H4 V21" fill="none" stroke="#4d525b" stroke-width="1.5" stroke-linejoin="round" stroke-linecap="round"/><path d="M22 1.5 V10 H30.5" fill="none" stroke="#41464f" stroke-width="1.3" stroke-linejoin="round" stroke-linecap="round"/><path d="M1 16.5 H12 M9.5 14 L12 16.5 L9.5 19" fill="none" stroke="#4d525b" stroke-width="1.5" stroke-linejoin="round" stroke-linecap="round"/></svg>
<span class="t" style="left:1808.00px;top:103.08px;font-size:16.00px;line-height:1;color:#868b92;letter-spacing:0.907px;-webkit-text-stroke-width:.3px;">Import</span>
<svg class="b" style="left:1872.00px;top:57.00px;" width="15" height="18" viewBox="0 0 15 18"><path d="M3 6 V1.5 H9 L13 5.5 V11 M9 1.5 V5.5 H13" fill="none" stroke="#41464f" stroke-width="1.3" stroke-linejoin="round" stroke-linecap="round"/><path d="M1 8 h5 M4.5 6.3 L6.2 8 L4.5 9.7" fill="none" stroke="#41464f" stroke-width="1.3" stroke-linejoin="round" stroke-linecap="round"/><path d="M3 14.5 h10 M3 16.5 h10" stroke="#393e46" stroke-width="1.2"/></svg>
<svg class="b" style="left:1921.00px;top:57.00px;" width="15" height="18" viewBox="0 0 15 18"><path d="M3 6 V1.5 H9 L13 5.5 V11 M9 1.5 V5.5 H13" fill="none" stroke="#41464f" stroke-width="1.3" stroke-linejoin="round" stroke-linecap="round"/><path d="M1 8 h5 M4.5 6.3 L6.2 8 L4.5 9.7" fill="none" stroke="#41464f" stroke-width="1.3" stroke-linejoin="round" stroke-linecap="round"/><path d="M3 14.5 h10 M3 16.5 h10" stroke="#393e46" stroke-width="1.2"/></svg>
<svg class="b" style="left:1953.50px;top:57.00px;" width="15" height="18" viewBox="0 0 15 18"><path d="M3 6 V1.5 H9 L13 5.5 V11 M9 1.5 V5.5 H13" fill="none" stroke="#41464f" stroke-width="1.3" stroke-linejoin="round" stroke-linecap="round"/><path d="M1 8 h5 M4.5 6.3 L6.2 8 L4.5 9.7" fill="none" stroke="#41464f" stroke-width="1.3" stroke-linejoin="round" stroke-linecap="round"/><path d="M3 14.5 h10 M3 16.5 h10" stroke="#393e46" stroke-width="1.2"/></svg>
<svg class="b" style="left:1872.00px;top:86.00px;" width="15" height="18" viewBox="0 0 15 18"><path d="M3 6 V1.5 H9 L13 5.5 V11 M9 1.5 V5.5 H13" fill="none" stroke="#41464f" stroke-width="1.3" stroke-linejoin="round" stroke-linecap="round"/><path d="M1 8 h5 M4.5 6.3 L6.2 8 L4.5 9.7" fill="none" stroke="#41464f" stroke-width="1.3" stroke-linejoin="round" stroke-linecap="round"/><path d="M3 14.5 h10 M3 16.5 h10" stroke="#393e46" stroke-width="1.2"/></svg>
<svg class="b" style="left:1872.00px;top:117.00px;" width="15" height="18" viewBox="0 0 15 18"><path d="M3 6 V1.5 H9 L13 5.5 V11 M9 1.5 V5.5 H13" fill="none" stroke="#41464f" stroke-width="1.3" stroke-linejoin="round" stroke-linecap="round"/><path d="M1 8 h5 M4.5 6.3 L6.2 8 L4.5 9.7" fill="none" stroke="#41464f" stroke-width="1.3" stroke-linejoin="round" stroke-linecap="round"/><path d="M3 14.5 h10 M3 16.5 h10" stroke="#393e46" stroke-width="1.2"/></svg>
<svg class="b" style="left:1921.00px;top:86.50px;" width="17" height="18" viewBox="0 0 17 18"><path d="M1.5 9 C1.5 3 7 2 10 2 H15.5 V9 M10.5 5.5 L15 2 M1 10 h6 M5.5 8.3 L7.2 10 L5.5 11.7" fill="none" stroke="#41464f" stroke-width="1.3" stroke-linejoin="round" stroke-linecap="round"/><path d="M4 15 h10" stroke="#393e46" stroke-width="2"/></svg>
<svg class="b" style="left:1921.00px;top:117.00px;" width="17" height="18" viewBox="0 0 17 18"><path d="M1.5 16.5 V3 H9 L12 6 V16.5 Z M4 9 h4 M4 12 h4 M13.5 1.5 V6 M14.5 8 V15" fill="none" stroke="#41464f" stroke-width="1.3" stroke-linejoin="round" stroke-linecap="round"/><path d="M8 10.5 h5 M11.5 9 L13 10.5 L11.5 12" fill="none" stroke="#41464f" stroke-width="1.3" stroke-linejoin="round" stroke-linecap="round"/></svg>
<svg class="b" style="left:1900.60px;top:124.80px;" width="8" height="6" viewBox="0 0 8 6"><path d="M.6 .8 H7.4 L4 5.2 Z" fill="#7d838b"/></svg>
<span class="t" style="left:1864.00px;top:151.78px;font-size:16.00px;line-height:1;color:#73787f;letter-spacing:0.731px;">Import</span>
<div class="b" style="left:1984.40px;top:61.00px;width:1.30px;height:94.00px;background:#2c3038;"></div>
<svg class="b" style="left:2001.00px;top:59.00px;" width="37" height="36" viewBox="0 0 37 36"><path d="M2 32 V1.5 H18 L23 6.5" fill="none" stroke="#41464f" stroke-width="1.3" stroke-linejoin="round" stroke-linecap="round"/><path d="M17 19 V13.5 H27.5 L33 19 V33.5 H17 V25" fill="none" stroke="#4d525b" stroke-width="1.5" stroke-linejoin="round" stroke-linecap="round"/><path d="M27.5 13.5 V19 H33" fill="none" stroke="#41464f" stroke-width="1.3" stroke-linejoin="round" stroke-linecap="round"/><path d="M10.5 22 H21 M13 19.8 L10.5 22 L13 24.2" fill="none" stroke="#4d525b" stroke-width="1.5" stroke-linejoin="round" stroke-linecap="round"/></svg>
<span class="t" style="left:2004.70px;top:102.78px;font-size:16.00px;line-height:1;color:#868b92;letter-spacing:-0.747px;transform-origin:left center;transform:scaleX(0.9141);-webkit-text-stroke-width:.3px;">OLE</span>
<span class="t" style="left:1994.00px;top:123.18px;font-size:16.00px;line-height:1;color:#868b92;letter-spacing:0.550px;-webkit-text-stroke-width:.3px;">Object</span>
<svg class="b" style="left:2075.00px;top:61.00px;" width="30" height="30" viewBox="0 0 30 30"><g transform="rotate(-45 15 15)"><rect x="10.8" y="-2" width="8.4" height="17" rx="4.2" fill="none" stroke="#4d525b" stroke-width="1.5" stroke-linejoin="round" stroke-linecap="round"/><rect x="10.8" y="15" width="8.4" height="17" rx="4.2" fill="none" stroke="#4d525b" stroke-width="1.5" stroke-linejoin="round" stroke-linecap="round"/><path d="M15 10.5 V19.5" fill="none" stroke="#4d525b" stroke-width="1.5" stroke-linejoin="round" stroke-linecap="round"/></g></svg>
<span class="t" style="left:2055.60px;top:103.08px;font-size:16.00px;line-height:1;color:#868b92;letter-spacing:0.339px;-webkit-text-stroke-width:.3px;">Hyperlink</span>
<svg class="b" style="left:2141.00px;top:57.00px;" width="38" height="37" viewBox="0 0 38 37"><path d="M12 32.5 H1.5 V1.5 H29.5 V14" fill="none" stroke="#4d525b" stroke-width="1.5" stroke-linejoin="round" stroke-linecap="round"/><path d="M8 9.5 H22 M8 17 H17" fill="none" stroke="#41464f" stroke-width="1.3" stroke-linejoin="round" stroke-linecap="round"/><path d="M18.5 34.5 L26.5 16.5 L34.5 34.5 M21.5 28 H31.5" stroke-width="2" fill="none" stroke="#4d525b"  stroke-linejoin="round" stroke-linecap="round"/></svg>
<span class="t" style="left:2142.00px;top:103.08px;font-size:16.00px;line-height:1;color:#868b92;letter-spacing:-0.097px;-webkit-text-stroke-width:.3px;">Field</span>
<svg class="b" style="left:2192.50px;top:55.50px;" width="18" height="17" viewBox="0 0 18 17"><path d="M8 14.5 H1.5 V1.5 H12 V8" fill="none" stroke="#4d525b" stroke-width="1.5" stroke-linejoin="round" stroke-linecap="round"/><rect x="10" y="10.5" width="5.5" height="4.5" fill="none" stroke="#4d525b" stroke-width="1.5" stroke-linejoin="round" stroke-linecap="round"/><path d="M4 5 h5" fill="none" stroke="#41464f" stroke-width="1.3" stroke-linejoin="round" stroke-linecap="round"/></svg>
<div class="b" style="left:2186.00px;top:81.20px;width:31.30px;height:29.30px;background:#2c313b;border-radius:3px;"></div>
<svg class="b" style="left:2192.50px;top:87.50px;" width="18" height="17" viewBox="0 0 18 17"><path d="M8 14.5 H1.5 V1.5 H12 V8" fill="none" stroke="#5a606a" stroke-width="1.5" stroke-linejoin="round" stroke-linecap="round"/><rect x="10" y="10.5" width="5.5" height="4.5" fill="none" stroke="#5a606a" stroke-width="1.5" stroke-linejoin="round" stroke-linecap="round"/><path d="M4 5 h5" fill="none" stroke="#41464f" stroke-width="1.3" stroke-linejoin="round" stroke-linecap="round"/></svg>
<svg class="b" style="left:2192.00px;top:118.50px;" width="18" height="18" viewBox="0 0 18 18"><path d="M2.5 8 A6.5 6.5 0 0 1 14 4.5 M15.5 10 A6.5 6.5 0 0 1 4 13.5" fill="none" stroke="#4d525b" stroke-width="1.5" stroke-linejoin="round" stroke-linecap="round"/><path d="M14.2 1.5 V4.8 H11 M3.8 16.5 V13.2 H7" fill="none" stroke="#4d525b" stroke-width="1.5" stroke-linejoin="round" stroke-linecap="round"/></svg>
<svg class="b" style="left:2221.80px;top:124.80px;" width="8" height="6" viewBox="0 0 8 6"><path d="M.6 .8 H7.4 L4 5.2 Z" fill="#7d838b"/></svg>
<span class="t" style="left:2095.50px;top:151.78px;font-size:16.00px;line-height:1;color:#73787f;letter-spacing:-0.266px;">Data</span>
<div class="b" style="left:2242.20px;top:61.00px;width:1.30px;height:94.00px;background:#2c3038;"></div>
<svg class="b" style="left:2259.00px;top:61.00px;" width="36" height="32" viewBox="0 0 36 32"><path d="M1 1.5 H31 V21.5 H1 Z M1 8 H31 M1 14.8 H31 M11 1.5 V21.5 M21 1.5 V21.5" fill="none" stroke="#4d525b" stroke-width="1.5" stroke-linejoin="round" stroke-linecap="round"/><rect x="14" y="19" width="22" height="12" fill="#21242c"/><path d="M24.5 23.5 H20.5 C17 23.5 17 29 20.5 29 H22 M27 23.5 H30.5 C34 23.5 34 29 30.5 29 H26 M22.5 26.2 h5.5" fill="none" stroke="#4d525b" stroke-width="1.5" stroke-linejoin="round" stroke-linecap="round"/></svg>
<span class="t" style="left:2258.50px;top:101.78px;font-size:16.00px;line-height:1;color:#868b92;letter-spacing:-0.566px;-webkit-text-stroke-width:.3px;">Data</span>
<span class="t" style="left:2260.60px;top:121.98px;font-size:16.00px;line-height:1;color:#868b92;letter-spacing:-0.486px;-webkit-text-stroke-width:.3px;">Link</span>
<svg class="b" style="left:2326.50px;top:59.50px;" width="36" height="34" viewBox="0 0 36 34"><path d="M1 1.5 H31 V15 M1 1.5 V24 H11 M1 8.8 H31 M1 16 H22 M11 1.5 V24 M21 1.5 V16" fill="none" stroke="#4d525b" stroke-width="1.5" stroke-linejoin="round" stroke-linecap="round"/><path d="M23 19.5 h9.5 v12.5 h-9 M15.5 27 h7 M20.5 25 L22.7 27 L20.5 29" fill="none" stroke="#41464f" stroke-width="1.3" stroke-linejoin="round" stroke-linecap="round"/></svg>
<span class="t" style="left:2326.90px;top:101.78px;font-size:16.00px;line-height:1;color:#868b92;letter-spacing:-0.591px;transform-origin:left center;transform:scaleX(0.9962);-webkit-text-stroke-width:.3px;">Data</span>
<span class="t" style="left:2306.90px;top:122.08px;font-size:16.00px;line-height:1;color:#868b92;letter-spacing:0.107px;-webkit-text-stroke-width:.3px;">Extraction</span>
<svg class="b" style="left:2390.50px;top:56.00px;" width="18" height="18" viewBox="0 0 18 18"><path d="M1 3 H12 V13 H1 Z M1 6.5 H12 M1 9.8 H12 M4.8 3 V13 M8.5 3 V13" fill="none" stroke="#4d525b" stroke-width="1.5" stroke-linejoin="round" stroke-linecap="round"/><circle cx="14.5" cy="3" r="2" fill="none" stroke="#4d525b" stroke-width="1.5" stroke-linejoin="round" stroke-linecap="round"/><path d="M9 16.5 h7" stroke="#4d525b" stroke-width="2"/></svg>
<svg class="b" style="left:2390.50px;top:86.50px;" width="18" height="18" viewBox="0 0 18 18"><path d="M1 3 H12 V13 H1 Z M1 6.5 H12 M1 9.8 H12 M4.8 3 V13 M8.5 3 V13" fill="none" stroke="#4d525b" stroke-width="1.5" stroke-linejoin="round" stroke-linecap="round"/><path d="M12 5 L16 1 M12.5 8 l4 3" fill="none" stroke="#4d525b" stroke-width="1.5" stroke-linejoin="round" stroke-linecap="round"/><path d="M9 16.5 h7" stroke="#4d525b" stroke-width="1.6"/></svg>
<svg class="b" style="left:2390.50px;top:117.50px;" width="18" height="18" viewBox="0 0 18 18"><path d="M2 1 V11.5 H14 M4 9 L7 5.5 L9.5 8" fill="none" stroke="#4d525b" stroke-width="1.5" stroke-linejoin="round" stroke-linecap="round"/><path d="M11 2 l3 3.5 M14 2 l-3 3.5" fill="none" stroke="#41464f" stroke-width="1.3" stroke-linejoin="round" stroke-linecap="round"/><path d="M4 15.5 h11 M6 14 L4 15.5 L6 17" fill="none" stroke="#41464f" stroke-width="1.3" stroke-linejoin="round" stroke-linecap="round"/></svg>
<span class="t" style="left:2275.60px;top:151.78px;font-size:16.00px;line-height:1;color:#73787f;letter-spacing:-0.062px;">Link and Extract</span>
<div class="b" style="left:2421.30px;top:61.00px;width:1.30px;height:94.00px;background:#2c3038;"></div>
<svg class="b" style="left:2457.00px;top:60.00px;" width="36" height="31" viewBox="0 0 36 31"><path d="M2.8 2 C.6 2 .6 12 2.8 12 C4.8 12 4.8 4.8 3.2 4.8 C2.2 4.8 2.2 9.4 3.2 9.4" fill="none" stroke="#41464f" stroke-width="1.3" stroke-linejoin="round" stroke-linecap="round"/><path d="M8 4.5 H33 V28.5 H3 V16" fill="none" stroke="#4d525b" stroke-width="1.5" stroke-linejoin="round" stroke-linecap="round"/><g transform="translate(8.5 10.5) scale(1.05)"><path d="M5 12 C1 12 .8 6.6 4.6 6.2 C5 1.6 11.6 .6 13 4.6 C17.4 3.6 18.8 9 16.2 11 C15.4 12 14.4 12 13.6 12 Z" fill="none" stroke="#4d525b" stroke-width="1.5" stroke-linejoin="round" stroke-linecap="round"/></g><path d="M15.5 19 h7 M15.5 20.8 h7" stroke="#4d525b" stroke-width="1.1"/></svg>
<span class="t" style="left:2432.50px;top:102.48px;font-size:16.00px;line-height:1;color:#868b92;letter-spacing:0.168px;-webkit-text-stroke-width:.3px;">Point Cloud</span>
<span class="t" style="left:2451.30px;top:122.58px;font-size:16.00px;line-height:1;color:#868b92;letter-spacing:0.428px;-webkit-text-stroke-width:.3px;">Attach</span>
<div class="b" style="left:2522.80px;top:53.00px;width:28.30px;height:28.30px;background:#2c313b;border-radius:3px;"></div>
<svg class="b" style="left:2527.50px;top:60.50px;" width="20" height="14" viewBox="0 0 20 14"><path d="M5 12 C1 12 .8 6.6 4.6 6.2 C5 1.6 11.6 .6 13 4.6 C17.4 3.6 18.8 9 16.2 11 C15.4 12 14.4 12 13.6 12 Z" fill="none" stroke="#5c626c" stroke-width="1.5" stroke-linejoin="round" stroke-linecap="round"/><path d="M7.5 6.5 v3.5 M10 6.5 v3.5 M12.2 6.5 v3.5" stroke="#5c626c" stroke-width="1.1"/></svg>
<span class="t" style="left:2448.50px;top:151.78px;font-size:16.00px;line-height:1;color:#73787f;letter-spacing:0.128px;">Point Cloud</span>
<svg class="b" style="left:12.50px;top:183.00px;" width="20" height="14" viewBox="0 0 20 14"><path d="M.8 2.6 H18.5 M.8 7.4 H9.5 M.8 12.2 H9.5" stroke="#a4a9ae" stroke-width="1.5"/><path d="M12.2 7.6 H18.6 L15.4 12.6 Z" fill="#d8dbde"/></svg>
<div class="b" style="left:41.20px;top:178.00px;width:98.50px;height:24.70px;background:#2c2f3a;border-radius:3px;"></div>
<span class="t" style="left:47.50px;top:183.43px;font-size:15.50px;line-height:1;color:#eceef0;font-weight:700;letter-spacing:0.333px;">cooext*</span>
<svg class="b" style="left:118.00px;top:184.00px;" width="13" height="13" viewBox="0 0 13 13"><path d="M2 2 L11 11 M11 2 L2 11" stroke="#c4c8cc" stroke-width="1.9"/></svg>
<svg class="b" style="left:151.00px;top:182.00px;" width="17" height="17" viewBox="0 0 17 17"><path d="M8.5 1 V16 M1 8.5 H16" stroke="#eceef0" stroke-width="2.2"/></svg>
<div class="b" style="left:178.40px;top:179.50px;width:1.20px;height:20.00px;background:#1c2329;"></div>
<div class="b" style="left:0.00px;top:207.50px;width:2560.00px;height:1.30px;background:#12181c;"></div>
<span class="t" style="left:9.20px;top:218.28px;font-size:15.80px;line-height:1;color:#8d9398;letter-spacing:-0.539px;">[—]</span>
<span class="t" style="left:38.60px;top:218.28px;font-size:15.80px;line-height:1;color:#8d9398;letter-spacing:0.562px;">[Top]</span>
<span class="t" style="left:80.00px;top:218.28px;font-size:15.80px;line-height:1;color:#8d9398;letter-spacing:0.099px;">[2D Wireframe]</span>
<span class="t" style="left:196.00px;top:218.28px;font-size:15.80px;line-height:1;color:#8d9398;letter-spacing:-0.639px;transform-origin:left center;transform:scaleX(0.9354);">[WCS]</span>
<div class="b" style="left:2553.30px;top:0.00px;width:6.70px;height:1410.00px;background:linear-gradient(180deg,#0b1318 0%,#0a1116 45%,#060c10 100%);"></div>
<svg class="b" style="left:0.00px;top:0.00px;filter:blur(.65px);" width="2560" height="1439" viewBox="0 0 2560 1439"><g fill="none"><path d="M777.8 581 L777.8 1092" stroke="#6a7070" stroke-width="1.3"/><path d="M817.4 604 L817.4 688" stroke="#5b7a5e" stroke-width="1.2"/><path d="M817.4 688 L817.4 850" stroke="#444a4a" stroke-width="1.1" stroke-dasharray="16 5"/><path d="M880.6 604 L880.6 688" stroke="#5b7a5e" stroke-width="1.2"/><path d="M880.6 688 L880.6 740" stroke="#444a4a" stroke-width="1.1" stroke-dasharray="16 5"/><path d="M853.4 846 L853.4 1092" stroke="#444a4a" stroke-width="1.2" stroke-dasharray="20 4"/><path d="M777.8 1040 L777.8 1092" stroke="#3d8a45" stroke-width="1.4"/><path d="M853.4 1040 L853.4 1092" stroke="#3d8a45" stroke-width="1.4"/><path d="M774.8 618 L902 618" stroke="#2a8c34" stroke-width="1.3"/><path d="M774.8 635.2 L902 635.2" stroke="#2a8c34" stroke-width="1.3"/><circle cx="777.8" cy="635.2" r="1.6" fill="#2a8c34"/><circle cx="817.4" cy="635.2" r="1.6" fill="#2a8c34"/><circle cx="880.6" cy="635.2" r="1.6" fill="#2a8c34"/><circle cx="777.8" cy="618" r="1.6" fill="#2a8c34"/><text transform="translate(798 628.6) rotate(0)" y="3.06" font-family="Liberation Sans" font-size="8.5" text-anchor="middle" fill="#9aa19b" textLength="18" lengthAdjust="spacingAndGlyphs">1900</text><text transform="translate(848.8 628.6) rotate(0)" y="3.06" font-family="Liberation Sans" font-size="8.5" text-anchor="middle" fill="#9aa19b" textLength="18" lengthAdjust="spacingAndGlyphs">3000</text><text transform="translate(896 628.6) rotate(0)" y="3.06" font-family="Liberation Sans" font-size="8.5" text-anchor="middle" fill="#9aa19b" textLength="18" lengthAdjust="spacingAndGlyphs">1800</text><path d="M774.8 1061 L902 1061" stroke="#2a8c34" stroke-width="1.3"/><path d="M774.8 1077.6 L902 1077.6" stroke="#2a8c34" stroke-width="1.3"/><circle cx="777.8" cy="1061" r="1.6" fill="#2a8c34"/><circle cx="853.4" cy="1061" r="1.6" fill="#2a8c34"/><circle cx="777.8" cy="1077.6" r="1.6" fill="#2a8c34"/><text transform="translate(815.8 1054.4) rotate(0)" y="3.06" font-family="Liberation Sans" font-size="8.5" text-anchor="middle" fill="#9aa19b" textLength="18" lengthAdjust="spacingAndGlyphs">3600</text><text transform="translate(885.6 1054.4) rotate(0)" y="3.06" font-family="Liberation Sans" font-size="8.5" text-anchor="middle" fill="#9aa19b" textLength="18" lengthAdjust="spacingAndGlyphs">3100</text><path d="M689 693.4 L745 693.4" stroke="#2a8c34" stroke-width="1.25"/><path d="M745 693.4 L902 693.4" stroke="#444a4a" stroke-width="1.1" stroke-dasharray="22 5"/><path d="M689 731.4 L745 731.4" stroke="#2a8c34" stroke-width="1.25"/><path d="M745 731.4 L902 731.4" stroke="#444a4a" stroke-width="1.1" stroke-dasharray="22 5"/><path d="M686.5 728.9 L692 731.4" stroke="#8a9090" stroke-width="1.1"/><path d="M689 743.4 L745 743.4" stroke="#2a8c34" stroke-width="1.25"/><path d="M745 743.4 L902 743.4" stroke="#444a4a" stroke-width="1.1" stroke-dasharray="22 5"/><path d="M689 794.4 L745 794.4" stroke="#2a8c34" stroke-width="1.25"/><path d="M745 794.4 L902 794.4" stroke="#444a4a" stroke-width="1.1" stroke-dasharray="22 5"/><path d="M686.5 792.2 L692 794.4" stroke="#8a9090" stroke-width="1.1"/><path d="M689 806.4 L745 806.4" stroke="#2a8c34" stroke-width="1.25"/><path d="M745 806.4 L902 806.4" stroke="#444a4a" stroke-width="1.1" stroke-dasharray="22 5"/><path d="M689 836 L745 836" stroke="#2a8c34" stroke-width="1.25"/><path d="M745 836 L902 836" stroke="#444a4a" stroke-width="1.1" stroke-dasharray="22 5"/><path d="M689 850.3 L745 850.3" stroke="#2a8c34" stroke-width="1.25"/><path d="M745 850.3 L902 850.3" stroke="#444a4a" stroke-width="1.1" stroke-dasharray="22 5"/><path d="M686.5 852.8 L692 850.3" stroke="#8a9090" stroke-width="1.1"/><path d="M689 882 L745 882" stroke="#2a8c34" stroke-width="1.25"/><path d="M745 882 L902 882" stroke="#444a4a" stroke-width="1.1" stroke-dasharray="22 5"/><path d="M689 907 L745 907" stroke="#2a8c34" stroke-width="1.25"/><path d="M745 907 L902 907" stroke="#444a4a" stroke-width="1.1" stroke-dasharray="22 5"/><path d="M686.5 904.5 L692 907" stroke="#8a9090" stroke-width="1.1"/><path d="M689 917.8 L745 917.8" stroke="#2a8c34" stroke-width="1.25"/><path d="M745 917.8 L902 917.8" stroke="#444a4a" stroke-width="1.1" stroke-dasharray="22 5"/><path d="M689 936.6 L745 936.6" stroke="#2a8c34" stroke-width="1.25"/><path d="M745 936.6 L902 936.6" stroke="#444a4a" stroke-width="1.1" stroke-dasharray="22 5"/><path d="M686.5 938.4 L692 936.6" stroke="#8a9090" stroke-width="1.1"/><path d="M689 963.8 L745 963.8" stroke="#2a8c34" stroke-width="1.25"/><path d="M745 963.8 L902 963.8" stroke="#444a4a" stroke-width="1.1" stroke-dasharray="22 5"/><path d="M689 989 L745 989" stroke="#2a8c34" stroke-width="1.25"/><path d="M745 989 L902 989" stroke="#444a4a" stroke-width="1.1" stroke-dasharray="22 5"/><path d="M689 1025.8 L745 1025.8" stroke="#2a8c34" stroke-width="1.25"/><path d="M745 1025.8 L902 1025.8" stroke="#444a4a" stroke-width="1.1" stroke-dasharray="22 5"/><path d="M670 927.9 L745 927.9" stroke="#8a9090" stroke-width="1.2"/><path d="M745 927.9 L902 927.9" stroke="#444a4a" stroke-width="1.1" stroke-dasharray="22 5"/><path d="M703.6 691 L703.6 1028" stroke="#2a8c34" stroke-width="1.3"/><path d="M720.4 691 L720.4 1028" stroke="#2a8c34" stroke-width="1.3"/><circle cx="720.4" cy="693.4" r="1.6" fill="#2a8c34"/><circle cx="720.4" cy="731.4" r="1.6" fill="#2a8c34"/><circle cx="720.4" cy="743.4" r="1.6" fill="#2a8c34"/><circle cx="720.4" cy="794.4" r="1.6" fill="#2a8c34"/><circle cx="720.4" cy="806.4" r="1.6" fill="#2a8c34"/><circle cx="720.4" cy="836" r="1.6" fill="#2a8c34"/><circle cx="720.4" cy="850.3" r="1.6" fill="#2a8c34"/><circle cx="720.4" cy="882" r="1.6" fill="#2a8c34"/><circle cx="720.4" cy="907" r="1.6" fill="#2a8c34"/><circle cx="720.4" cy="917.8" r="1.6" fill="#2a8c34"/><circle cx="720.4" cy="936.6" r="1.6" fill="#2a8c34"/><circle cx="720.4" cy="963.8" r="1.6" fill="#2a8c34"/><circle cx="720.4" cy="989" r="1.6" fill="#2a8c34"/><circle cx="720.4" cy="1025.8" r="1.6" fill="#2a8c34"/><circle cx="703.6" cy="693.4" r="1.6" fill="#2a8c34"/><circle cx="703.6" cy="1025.8" r="1.6" fill="#2a8c34"/><text transform="translate(714 712.3) rotate(-90)" y="2.988" font-family="Liberation Sans" font-size="8.3" text-anchor="middle" fill="#9aa19b" textLength="17.6" lengthAdjust="spacingAndGlyphs">1800</text><text transform="translate(714 737.3) rotate(-90)" y="2.988" font-family="Liberation Sans" font-size="8.3" text-anchor="middle" fill="#9aa19b" textLength="13.2" lengthAdjust="spacingAndGlyphs">500</text><text transform="translate(714 769) rotate(-90)" y="2.988" font-family="Liberation Sans" font-size="8.3" text-anchor="middle" fill="#9aa19b" textLength="17.6" lengthAdjust="spacingAndGlyphs">2400</text><text transform="translate(714 800.3) rotate(-90)" y="2.988" font-family="Liberation Sans" font-size="8.3" text-anchor="middle" fill="#9aa19b" textLength="13.2" lengthAdjust="spacingAndGlyphs">500</text><text transform="translate(714 821) rotate(-90)" y="2.988" font-family="Liberation Sans" font-size="8.3" text-anchor="middle" fill="#9aa19b" textLength="17.6" lengthAdjust="spacingAndGlyphs">1400</text><text transform="translate(714 843) rotate(-90)" y="2.988" font-family="Liberation Sans" font-size="8.3" text-anchor="middle" fill="#9aa19b" textLength="13.2" lengthAdjust="spacingAndGlyphs">700</text><text transform="translate(714 866) rotate(-90)" y="2.988" font-family="Liberation Sans" font-size="8.3" text-anchor="middle" fill="#9aa19b" textLength="17.6" lengthAdjust="spacingAndGlyphs">1500</text><text transform="translate(714 894.5) rotate(-90)" y="2.988" font-family="Liberation Sans" font-size="8.3" text-anchor="middle" fill="#9aa19b" textLength="17.6" lengthAdjust="spacingAndGlyphs">1200</text><text transform="translate(714 912.3) rotate(-90)" y="2.988" font-family="Liberation Sans" font-size="8.3" text-anchor="middle" fill="#9aa19b" textLength="13.2" lengthAdjust="spacingAndGlyphs">500</text><text transform="translate(714 927) rotate(-90)" y="2.988" font-family="Liberation Sans" font-size="8.3" text-anchor="middle" fill="#9aa19b" textLength="13.2" lengthAdjust="spacingAndGlyphs">900</text><text transform="translate(714 950) rotate(-90)" y="2.988" font-family="Liberation Sans" font-size="8.3" text-anchor="middle" fill="#9aa19b" textLength="17.6" lengthAdjust="spacingAndGlyphs">1300</text><text transform="translate(714 976.3) rotate(-90)" y="2.988" font-family="Liberation Sans" font-size="8.3" text-anchor="middle" fill="#9aa19b" textLength="17.6" lengthAdjust="spacingAndGlyphs">1200</text><text transform="translate(714 1007.5) rotate(-90)" y="2.988" font-family="Liberation Sans" font-size="8.3" text-anchor="middle" fill="#9aa19b" textLength="17.6" lengthAdjust="spacingAndGlyphs">1800</text><text transform="translate(697 860) rotate(-90)" y="2.988" font-family="Liberation Sans" font-size="8.3" text-anchor="middle" fill="#9aa19b" textLength="22" lengthAdjust="spacingAndGlyphs">15900</text><path d="M777.8 743.6 H902" stroke="#3f1618" stroke-width="6"/><path d="M777.8 740.6 H902" stroke="#5e2021" stroke-width="1" opacity=".8"/><path d="M775.4 745 V924" stroke="#6c3a30" stroke-width="2.4"/><path d="M781.6 747.4 V920.5 M781.6 747.4 H792 V743.5 M805.4 743.5 V747.4 H816.6 V803" stroke="#777a48" stroke-width="1.3" fill="none"/><path d="M820.5 748 V800" stroke="#5c5a34" stroke-width="1.6"/><path d="M880.8 748 V803" stroke="#30131a" stroke-width="7.5"/><path d="M781 923.5 H850" stroke="#4c1618" stroke-width="5"/><path d="M781 920.4 H850" stroke="#7a5a34" stroke-width="1"/><path d="M851.8 846 V834.4 H886" stroke="#6e2424" stroke-width="2" fill="none"/><path d="M853 960.6 H902 M853 966.2 H902" stroke="#642022" stroke-width="1.5"/><path d="M786 836 H798 V841 H783" stroke="#84823c" stroke-width="1.1" fill="none"/><path d="M832 800 h8 v5" stroke="#8a5a30" stroke-width="1.1" fill="none"/><path d="M850.3 870.5 H857.3 V915 H871 V922 H857.3 V939 H850.3 Z" fill="#07120b" stroke="#2c9c3e" stroke-width="1.5"/><path d="M833.7 854.3 L833.7 906.3" stroke="#5f7a5f" stroke-width="1.3"/><circle cx="833.7" cy="854.3" r="1.6" fill="#86a07f"/><circle cx="833.7" cy="882" r="1.6" fill="#86a07f"/><circle cx="833.7" cy="906.3" r="1.6" fill="#86a07f"/><path d="M833.7 906.3 L846 906.3" stroke="#5f7a5f" stroke-width="1.1"/><text transform="translate(828.4 868) rotate(-90)" y="2.7" font-family="Liberation Sans" font-size="7.5" text-anchor="middle" fill="#9aa19b" textLength="17" lengthAdjust="spacingAndGlyphs">1300</text><text transform="translate(828.4 893) rotate(-90)" y="2.7" font-family="Liberation Sans" font-size="7.5" text-anchor="middle" fill="#9aa19b" textLength="17" lengthAdjust="spacingAndGlyphs">1100</text><path d="M760.7 780 L760.7 808" stroke="#8a9088" stroke-width="1.2"/><circle cx="760.7" cy="780" r="1.6" fill="#9aa098"/><circle cx="760.7" cy="806.4" r="1.6" fill="#9aa098"/><text transform="translate(754.5 793) rotate(-90)" y="2.7" font-family="Liberation Sans" font-size="7.5" text-anchor="middle" fill="#9aa19b" textLength="17" lengthAdjust="spacingAndGlyphs">1700</text><path d="M760.7 917 L760.7 934" stroke="#8a9088" stroke-width="1.2"/><circle cx="760.7" cy="917.8" r="1.6" fill="#9aa098"/><circle cx="760.7" cy="932" r="1.6" fill="#9aa098"/><text transform="translate(754.5 925) rotate(-90)" y="2.52" font-family="Liberation Sans" font-size="7" text-anchor="middle" fill="#9aa19b" textLength="11" lengthAdjust="spacingAndGlyphs">350</text><path d="M816 722 L830 722" stroke="#86a07f" stroke-width="1.2"/><circle cx="817.4" cy="722" r="1.6" fill="#86a07f"/><circle cx="828.6" cy="722" r="1.6" fill="#86a07f"/><path d="M828.6 722 L828.6 733" stroke="#5f7a5f" stroke-width="1"/><text transform="translate(824 716.5) rotate(0)" y="2.7" font-family="Liberation Sans" font-size="7.5" text-anchor="middle" fill="#9aa19b" textLength="11" lengthAdjust="spacingAndGlyphs">300</text><text transform="translate(881 721) rotate(0)" y="2.7" font-family="Liberation Sans" font-size="7.5" text-anchor="middle" fill="#9aa19b" textLength="11" lengthAdjust="spacingAndGlyphs">100</text><circle cx="880" cy="727" r="1.6" fill="#86a07f"/><text transform="translate(754.5 735) rotate(-90)" y="2.52" font-family="Liberation Sans" font-size="7" text-anchor="middle" fill="#9aa18f" textLength="11" lengthAdjust="spacingAndGlyphs">300</text><text transform="translate(760 735) rotate(-90)" y="2.52" font-family="Liberation Sans" font-size="7" text-anchor="middle" fill="#9aa18f" textLength="11" lengthAdjust="spacingAndGlyphs">300</text><text transform="translate(754.5 832) rotate(-90)" y="2.52" font-family="Liberation Sans" font-size="7" text-anchor="middle" fill="#9aa18f" textLength="11" lengthAdjust="spacingAndGlyphs">250</text><text transform="translate(760 832) rotate(-90)" y="2.52" font-family="Liberation Sans" font-size="7" text-anchor="middle" fill="#9aa18f" textLength="11" lengthAdjust="spacingAndGlyphs">250</text><text transform="translate(821.5 822) rotate(-90)" y="2.52" font-family="Liberation Sans" font-size="7" text-anchor="middle" fill="#9aa18f" textLength="11" lengthAdjust="spacingAndGlyphs">250</text><text transform="translate(827 822) rotate(-90)" y="2.52" font-family="Liberation Sans" font-size="7" text-anchor="middle" fill="#9aa18f" textLength="11" lengthAdjust="spacingAndGlyphs">250</text><text transform="translate(873.5 823) rotate(-90)" y="2.52" font-family="Liberation Sans" font-size="7" text-anchor="middle" fill="#9aa18f" textLength="11" lengthAdjust="spacingAndGlyphs">250</text><text transform="translate(879 823) rotate(-90)" y="2.52" font-family="Liberation Sans" font-size="7" text-anchor="middle" fill="#9aa18f" textLength="11" lengthAdjust="spacingAndGlyphs">250</text><text transform="translate(830.5 957) rotate(-90)" y="2.52" font-family="Liberation Sans" font-size="7" text-anchor="middle" fill="#9aa18f" textLength="11" lengthAdjust="spacingAndGlyphs">400</text><text transform="translate(836 957) rotate(-90)" y="2.52" font-family="Liberation Sans" font-size="7" text-anchor="middle" fill="#9aa18f" textLength="11" lengthAdjust="spacingAndGlyphs">400</text><text transform="translate(896 837) rotate(-90)" y="2.7" font-family="Liberation Sans" font-size="7.5" text-anchor="middle" fill="#9aa19b" textLength="7.5" lengthAdjust="spacingAndGlyphs">80</text><text transform="translate(893 888) rotate(-90)" y="2.7" font-family="Liberation Sans" font-size="7.5" text-anchor="middle" fill="#9aa19b" textLength="11.25" lengthAdjust="spacingAndGlyphs">300</text><text transform="translate(897 939) rotate(-90)" y="2.7" font-family="Liberation Sans" font-size="7.5" text-anchor="middle" fill="#9aa19b" textLength="7.5" lengthAdjust="spacingAndGlyphs">80</text><circle cx="777.8" cy="735.4" r="9.3" fill="#76105f" stroke="#bd2398" stroke-width="1.5"/><path d="M766 735.4 H789.6 M777.8 725.1 V745.7" stroke="#d848b6" stroke-width="1" opacity=".55"/><circle cx="828.6" cy="743.4" r="9.3" fill="#76105f" stroke="#bd2398" stroke-width="1.5"/><path d="M816.8 743.4 H840.4 M828.6 733.1 V753.7" stroke="#d848b6" stroke-width="1" opacity=".55"/><circle cx="879" cy="743.4" r="9.3" fill="#76105f" stroke="#bd2398" stroke-width="1.5"/><path d="M867.2 743.4 H890.8 M879 733.1 V753.7" stroke="#d848b6" stroke-width="1" opacity=".55"/><circle cx="777.8" cy="782" r="9.3" fill="#76105f" stroke="#bd2398" stroke-width="1.5"/><path d="M766 782 H789.6 M777.8 771.7 V792.3" stroke="#d848b6" stroke-width="1" opacity=".55"/><circle cx="825.4" cy="806.4" r="9.3" fill="#76105f" stroke="#bd2398" stroke-width="1.5"/><path d="M813.6 806.4 H837.2 M825.4 796.1 V816.7" stroke="#d848b6" stroke-width="1" opacity=".55"/><circle cx="875.8" cy="806.4" r="9.3" fill="#76105f" stroke="#bd2398" stroke-width="1.5"/><path d="M864 806.4 H887.6 M875.8 796.1 V816.7" stroke="#d848b6" stroke-width="1" opacity=".55"/><circle cx="777.8" cy="832" r="9.3" fill="#76105f" stroke="#bd2398" stroke-width="1.5"/><path d="M766 832 H789.6 M777.8 821.7 V842.3" stroke="#d848b6" stroke-width="1" opacity=".55"/><circle cx="853.4" cy="854.3" r="9.3" fill="#76105f" stroke="#bd2398" stroke-width="1.5"/><path d="M841.6 854.3 H865.2 M853.4 844 V864.6" stroke="#d848b6" stroke-width="1" opacity=".55"/><circle cx="777.8" cy="882" r="9.3" fill="#76105f" stroke="#bd2398" stroke-width="1.5"/><path d="M766 882 H789.6 M777.8 871.7 V892.3" stroke="#d848b6" stroke-width="1" opacity=".55"/><circle cx="853.4" cy="904.7" r="9.3" fill="#76105f" stroke="#bd2398" stroke-width="1.5"/><path d="M841.6 904.7 H865.2 M853.4 894.4 V915" stroke="#d848b6" stroke-width="1" opacity=".55"/><circle cx="777.8" cy="931.9" r="9.3" fill="#76105f" stroke="#bd2398" stroke-width="1.5"/><path d="M766 931.9 H789.6 M777.8 921.6 V942.2" stroke="#d848b6" stroke-width="1" opacity=".55"/><circle cx="853.4" cy="955" r="9.3" fill="#76105f" stroke="#bd2398" stroke-width="1.5"/><path d="M841.6 955 H865.2 M853.4 944.7 V965.3" stroke="#d848b6" stroke-width="1" opacity=".55"/><circle cx="777.8" cy="595.6" r="8.6" fill="#050b0e" stroke="#8a9090" stroke-width="1.3"/><text x="777.8" y="600.7" font-family="Liberation Sans" font-size="15" text-anchor="middle" fill="#a7adad">1</text><circle cx="817.4" cy="595.6" r="8.6" fill="#050b0e" stroke="#8a9090" stroke-width="1.3"/><text x="817.4" y="600.7" font-family="Liberation Sans" font-size="15" text-anchor="middle" fill="#a7adad">2</text><circle cx="880.6" cy="595.6" r="8.6" fill="#050b0e" stroke="#8a9090" stroke-width="1.3"/><text x="880.6" y="600.7" font-family="Liberation Sans" font-size="15" text-anchor="middle" fill="#a7adad">4</text><path d="M777.8 587 L777.8 604" stroke="#6a7070" stroke-width="1"/><circle cx="680.4" cy="693.4" r="8.8" fill="#050b0e" stroke="#8a9090" stroke-width="1.3"/><text x="680.4" y="698.5" font-family="Liberation Serif" font-size="15" text-anchor="middle" fill="#a7adad">P</text><circle cx="680.4" cy="722.7" r="8.8" fill="#050b0e" stroke="#8a9090" stroke-width="1.3"/><text x="680.4" y="727.8" font-family="Liberation Serif" font-size="15" text-anchor="middle" fill="#a7adad">N</text><circle cx="680.4" cy="743.4" r="8.8" fill="#050b0e" stroke="#8a9090" stroke-width="1.3"/><text x="680.4" y="748.5" font-family="Liberation Serif" font-size="15" text-anchor="middle" fill="#a7adad">M</text><circle cx="680.4" cy="786" r="8.8" fill="#050b0e" stroke="#8a9090" stroke-width="1.3"/><text x="680.4" y="791.1" font-family="Liberation Serif" font-size="15" text-anchor="middle" fill="#a7adad">L</text><circle cx="680.4" cy="806.4" r="8.8" fill="#050b0e" stroke="#8a9090" stroke-width="1.3"/><text x="680.4" y="811.5" font-family="Liberation Serif" font-size="15" text-anchor="middle" fill="#a7adad">K</text><circle cx="680.4" cy="836" r="8.8" fill="#050b0e" stroke="#8a9090" stroke-width="1.3"/><text x="680.4" y="841.1" font-family="Liberation Serif" font-size="15" text-anchor="middle" fill="#a7adad">J</text><circle cx="680.4" cy="859" r="8.8" fill="#050b0e" stroke="#8a9090" stroke-width="1.3"/><text x="680.4" y="864.1" font-family="Liberation Serif" font-size="15" text-anchor="middle" fill="#a7adad">H</text><circle cx="680.4" cy="882" r="8.8" fill="#050b0e" stroke="#8a9090" stroke-width="1.3"/><text x="680.4" y="887.1" font-family="Liberation Serif" font-size="15" text-anchor="middle" fill="#a7adad">G</text><circle cx="680.4" cy="898.3" r="8.8" fill="#050b0e" stroke="#8a9090" stroke-width="1.3"/><text x="680.4" y="903.4" font-family="Liberation Serif" font-size="15" text-anchor="middle" fill="#a7adad">F</text><circle cx="680.4" cy="917.8" r="8.8" fill="#050b0e" stroke="#8a9090" stroke-width="1.3"/><text x="680.4" y="922.9" font-family="Liberation Serif" font-size="15" text-anchor="middle" fill="#a7adad">E</text><circle cx="680.4" cy="944.6" r="8.8" fill="#050b0e" stroke="#8a9090" stroke-width="1.3"/><text x="680.4" y="949.7" font-family="Liberation Serif" font-size="15" text-anchor="middle" fill="#a7adad">D</text><circle cx="680.4" cy="963.8" r="8.8" fill="#050b0e" stroke="#8a9090" stroke-width="1.3"/><text x="680.4" y="968.9" font-family="Liberation Serif" font-size="15" text-anchor="middle" fill="#a7adad">C</text><circle cx="680.4" cy="989" r="8.8" fill="#050b0e" stroke="#8a9090" stroke-width="1.3"/><text x="680.4" y="994.1" font-family="Liberation Serif" font-size="15" text-anchor="middle" fill="#a7adad">B</text><circle cx="680.4" cy="1025.8" r="8.8" fill="#050b0e" stroke="#8a9090" stroke-width="1.3"/><text x="680.4" y="1030.9" font-family="Liberation Serif" font-size="15" text-anchor="middle" fill="#a7adad">A</text><circle cx="660.8" cy="927.9" r="8.6" fill="#050b0e" stroke="#8a9090" stroke-width="1.3"/><text x="660.8" y="931.3" font-family="Liberation Serif" font-size="10" text-anchor="middle" fill="#a7adad" textLength="13" lengthAdjust="spacingAndGlyphs">1/D</text><path d="M1660 693.4 L1716.5 693.4" stroke="#6e7474" stroke-width="1.2"/><path d="M1660 731.4 L1716.5 731.4" stroke="#6e7474" stroke-width="1.2"/><path d="M1712 731.4 L1718.5 728.7" stroke="#8a9090" stroke-width="1.1"/><path d="M1660 743.4 L1716.5 743.4" stroke="#6e7474" stroke-width="1.2"/><path d="M1660 794.4 L1716.5 794.4" stroke="#6e7474" stroke-width="1.2"/><path d="M1712 794.4 L1718.5 791.7" stroke="#8a9090" stroke-width="1.1"/><path d="M1660 806.4 L1716.5 806.4" stroke="#6e7474" stroke-width="1.2"/><path d="M1660 836 L1716.5 836" stroke="#6e7474" stroke-width="1.2"/><path d="M1660 850.3 L1716.5 850.3" stroke="#6e7474" stroke-width="1.2"/><path d="M1712 850.3 L1718.5 852.4" stroke="#8a9090" stroke-width="1.1"/><path d="M1660 882 L1716.5 882" stroke="#6e7474" stroke-width="1.2"/><path d="M1660 907 L1716.5 907" stroke="#6e7474" stroke-width="1.2"/><path d="M1712 907 L1718.5 904.9" stroke="#8a9090" stroke-width="1.1"/><path d="M1660 917.8 L1716.5 917.8" stroke="#6e7474" stroke-width="1.2"/><path d="M1660 936.6 L1716.5 936.6" stroke="#6e7474" stroke-width="1.2"/><path d="M1660 963.8 L1716.5 963.8" stroke="#6e7474" stroke-width="1.2"/><path d="M1660 989 L1716.5 989" stroke="#6e7474" stroke-width="1.2"/><path d="M1660 1025.8 L1716.5 1025.8" stroke="#6e7474" stroke-width="1.2"/><path d="M1685.7 691 L1685.7 1028" stroke="#2a8c34" stroke-width="1.3"/><path d="M1702 691 L1702 1028" stroke="#2a8c34" stroke-width="1.3"/><circle cx="1685.7" cy="693.4" r="1.6" fill="#2a8c34"/><circle cx="1685.7" cy="731.4" r="1.6" fill="#2a8c34"/><circle cx="1685.7" cy="743.4" r="1.6" fill="#2a8c34"/><circle cx="1685.7" cy="794.4" r="1.6" fill="#2a8c34"/><circle cx="1685.7" cy="806.4" r="1.6" fill="#2a8c34"/><circle cx="1685.7" cy="836" r="1.6" fill="#2a8c34"/><circle cx="1685.7" cy="850.3" r="1.6" fill="#2a8c34"/><circle cx="1685.7" cy="882" r="1.6" fill="#2a8c34"/><circle cx="1685.7" cy="907" r="1.6" fill="#2a8c34"/><circle cx="1685.7" cy="917.8" r="1.6" fill="#2a8c34"/><circle cx="1685.7" cy="936.6" r="1.6" fill="#2a8c34"/><circle cx="1685.7" cy="963.8" r="1.6" fill="#2a8c34"/><circle cx="1685.7" cy="989" r="1.6" fill="#2a8c34"/><circle cx="1685.7" cy="1025.8" r="1.6" fill="#2a8c34"/><circle cx="1702" cy="693.4" r="1.6" fill="#2a8c34"/><circle cx="1702" cy="1025.8" r="1.6" fill="#2a8c34"/><text transform="translate(1679.3 712.3) rotate(-90)" y="2.988" font-family="Liberation Sans" font-size="8.3" text-anchor="middle" fill="#9aa19b" textLength="17.6" lengthAdjust="spacingAndGlyphs">1800</text><text transform="translate(1679.3 737.3) rotate(-90)" y="2.988" font-family="Liberation Sans" font-size="8.3" text-anchor="middle" fill="#9aa19b" textLength="13.2" lengthAdjust="spacingAndGlyphs">500</text><text transform="translate(1679.3 769) rotate(-90)" y="2.988" font-family="Liberation Sans" font-size="8.3" text-anchor="middle" fill="#9aa19b" textLength="17.6" lengthAdjust="spacingAndGlyphs">2400</text><text transform="translate(1679.3 800.3) rotate(-90)" y="2.988" font-family="Liberation Sans" font-size="8.3" text-anchor="middle" fill="#9aa19b" textLength="13.2" lengthAdjust="spacingAndGlyphs">500</text><text transform="translate(1679.3 821) rotate(-90)" y="2.988" font-family="Liberation Sans" font-size="8.3" text-anchor="middle" fill="#9aa19b" textLength="17.6" lengthAdjust="spacingAndGlyphs">1400</text><text transform="translate(1679.3 843) rotate(-90)" y="2.988" font-family="Liberation Sans" font-size="8.3" text-anchor="middle" fill="#9aa19b" textLength="13.2" lengthAdjust="spacingAndGlyphs">700</text><text transform="translate(1679.3 866) rotate(-90)" y="2.988" font-family="Liberation Sans" font-size="8.3" text-anchor="middle" fill="#9aa19b" textLength="17.6" lengthAdjust="spacingAndGlyphs">1500</text><text transform="translate(1679.3 894.5) rotate(-90)" y="2.988" font-family="Liberation Sans" font-size="8.3" text-anchor="middle" fill="#9aa19b" textLength="17.6" lengthAdjust="spacingAndGlyphs">1200</text><text transform="translate(1679.3 912.3) rotate(-90)" y="2.988" font-family="Liberation Sans" font-size="8.3" text-anchor="middle" fill="#9aa19b" textLength="13.2" lengthAdjust="spacingAndGlyphs">500</text><text transform="translate(1679.3 927) rotate(-90)" y="2.988" font-family="Liberation Sans" font-size="8.3" text-anchor="middle" fill="#9aa19b" textLength="13.2" lengthAdjust="spacingAndGlyphs">900</text><text transform="translate(1679.3 950) rotate(-90)" y="2.988" font-family="Liberation Sans" font-size="8.3" text-anchor="middle" fill="#9aa19b" textLength="17.6" lengthAdjust="spacingAndGlyphs">1300</text><text transform="translate(1679.3 976.3) rotate(-90)" y="2.988" font-family="Liberation Sans" font-size="8.3" text-anchor="middle" fill="#9aa19b" textLength="17.6" lengthAdjust="spacingAndGlyphs">1200</text><text transform="translate(1679.3 1007.5) rotate(-90)" y="2.988" font-family="Liberation Sans" font-size="8.3" text-anchor="middle" fill="#9aa19b" textLength="17.6" lengthAdjust="spacingAndGlyphs">1800</text><text transform="translate(1696 857) rotate(-90)" y="2.988" font-family="Liberation Sans" font-size="8.3" text-anchor="middle" fill="#9aa19b" textLength="22" lengthAdjust="spacingAndGlyphs">15900</text><circle cx="1724.9" cy="693.6" r="8.8" fill="#050b0e" stroke="#8a9090" stroke-width="1.3"/><text x="1724.9" y="698.7" font-family="Liberation Serif" font-size="15" text-anchor="middle" fill="#a7adad">P</text><circle cx="1724.9" cy="722.7" r="8.8" fill="#050b0e" stroke="#8a9090" stroke-width="1.3"/><text x="1724.9" y="727.8" font-family="Liberation Serif" font-size="15" text-anchor="middle" fill="#a7adad">N</text><circle cx="1724.9" cy="744.2" r="8.8" fill="#050b0e" stroke="#8a9090" stroke-width="1.3"/><text x="1724.9" y="749.3" font-family="Liberation Serif" font-size="15" text-anchor="middle" fill="#a7adad">M</text><circle cx="1724.9" cy="785.7" r="8.8" fill="#050b0e" stroke="#8a9090" stroke-width="1.3"/><text x="1724.9" y="790.8" font-family="Liberation Serif" font-size="15" text-anchor="middle" fill="#a7adad">L</text><circle cx="1724.9" cy="806.9" r="8.8" fill="#050b0e" stroke="#8a9090" stroke-width="1.3"/><text x="1724.9" y="812" font-family="Liberation Serif" font-size="15" text-anchor="middle" fill="#a7adad">K</text><circle cx="1724.9" cy="836.2" r="8.8" fill="#050b0e" stroke="#8a9090" stroke-width="1.3"/><text x="1724.9" y="841.3" font-family="Liberation Serif" font-size="15" text-anchor="middle" fill="#a7adad">J</text><circle cx="1724.9" cy="858.4" r="8.8" fill="#050b0e" stroke="#8a9090" stroke-width="1.3"/><text x="1724.9" y="863.5" font-family="Liberation Serif" font-size="15" text-anchor="middle" fill="#a7adad">H</text><circle cx="1724.9" cy="882.6" r="8.8" fill="#050b0e" stroke="#8a9090" stroke-width="1.3"/><text x="1724.9" y="887.7" font-family="Liberation Serif" font-size="15" text-anchor="middle" fill="#a7adad">G</text><circle cx="1724.9" cy="898.9" r="8.8" fill="#050b0e" stroke="#8a9090" stroke-width="1.3"/><text x="1724.9" y="904" font-family="Liberation Serif" font-size="15" text-anchor="middle" fill="#a7adad">F</text><circle cx="1724.9" cy="917.8" r="8.8" fill="#050b0e" stroke="#8a9090" stroke-width="1.3"/><text x="1724.9" y="922.9" font-family="Liberation Serif" font-size="15" text-anchor="middle" fill="#a7adad">E</text><circle cx="1724.9" cy="936.4" r="8.8" fill="#050b0e" stroke="#8a9090" stroke-width="1.3"/><text x="1724.9" y="941.5" font-family="Liberation Serif" font-size="15" text-anchor="middle" fill="#a7adad">D</text><circle cx="1724.9" cy="963.5" r="8.8" fill="#050b0e" stroke="#8a9090" stroke-width="1.3"/><text x="1724.9" y="968.6" font-family="Liberation Serif" font-size="15" text-anchor="middle" fill="#a7adad">C</text><circle cx="1724.9" cy="988" r="8.8" fill="#050b0e" stroke="#8a9090" stroke-width="1.3"/><text x="1724.9" y="993.1" font-family="Liberation Serif" font-size="15" text-anchor="middle" fill="#a7adad">B</text><circle cx="1724.9" cy="1026.2" r="8.8" fill="#050b0e" stroke="#8a9090" stroke-width="1.3"/><text x="1724.9" y="1031.3" font-family="Liberation Serif" font-size="15" text-anchor="middle" fill="#a7adad">A</text><path d="M1662 927.9 L1670 927.9" stroke="#3a4040" stroke-width="1"/><path d="M777.6 1085 L777.6 1092" stroke="#6a7070" stroke-width="1.2"/><circle cx="777.6" cy="1100.4" r="8.6" fill="#050b0e" stroke="#8a9090" stroke-width="1.3"/><text x="777.6" y="1105.16" font-family="Liberation Sans" font-size="14" text-anchor="middle" fill="#a7adad">1</text><path d="M853.2 1085 L853.2 1092" stroke="#6a7070" stroke-width="1.2"/><circle cx="853.2" cy="1100.4" r="8.6" fill="#050b0e" stroke="#8a9090" stroke-width="1.3"/><text x="853.2" y="1105.16" font-family="Liberation Sans" font-size="14" text-anchor="middle" fill="#a7adad">3</text><path d="M918.5 1085 L918.5 1092" stroke="#6a7070" stroke-width="1.2"/><circle cx="918.5" cy="1100.4" r="8.6" fill="#050b0e" stroke="#8a9090" stroke-width="1.3"/><text x="918.5" y="1105.16" font-family="Liberation Sans" font-size="14" text-anchor="middle" fill="#a7adad">5</text><path d="M999.8 1085 L999.8 1092" stroke="#6a7070" stroke-width="1.2"/><circle cx="999.8" cy="1100.4" r="8.6" fill="#050b0e" stroke="#8a9090" stroke-width="1.3"/><text x="999.8" y="1105.16" font-family="Liberation Sans" font-size="14" text-anchor="middle" fill="#a7adad">7</text><path d="M1076.7 1085 L1076.7 1092" stroke="#6a7070" stroke-width="1.2"/><circle cx="1076.7" cy="1100.4" r="8.6" fill="#050b0e" stroke="#8a9090" stroke-width="1.3"/><text x="1076.7" y="1105.16" font-family="Liberation Sans" font-size="14" text-anchor="middle" fill="#a7adad">9</text><path d="M1115.7 1085 L1115.7 1092" stroke="#6a7070" stroke-width="1.2"/><circle cx="1115.7" cy="1100.4" r="8.6" fill="#050b0e" stroke="#8a9090" stroke-width="1.3"/><text x="1115.7" y="1104.65" font-family="Liberation Sans" font-size="12.5" text-anchor="middle" fill="#a7adad" textLength="11.5" lengthAdjust="spacingAndGlyphs">10</text><path d="M1140 1085 L1140 1092" stroke="#6a7070" stroke-width="1.2"/><circle cx="1140" cy="1100.4" r="8.6" fill="#050b0e" stroke="#8a9090" stroke-width="1.3"/><text x="1140" y="1104.65" font-family="Liberation Sans" font-size="12.5" text-anchor="middle" fill="#a7adad" textLength="11.5" lengthAdjust="spacingAndGlyphs">12</text><path d="M1209.8 1085 L1209.8 1092" stroke="#6a7070" stroke-width="1.2"/><circle cx="1209.8" cy="1100.4" r="8.6" fill="#050b0e" stroke="#8a9090" stroke-width="1.3"/><text x="1209.8" y="1104.65" font-family="Liberation Sans" font-size="12.5" text-anchor="middle" fill="#a7adad" textLength="11.5" lengthAdjust="spacingAndGlyphs">14</text><path d="M1278 1085 L1278 1092" stroke="#6a7070" stroke-width="1.2"/><circle cx="1278" cy="1100.4" r="8.6" fill="#050b0e" stroke="#8a9090" stroke-width="1.3"/><text x="1278" y="1104.65" font-family="Liberation Sans" font-size="12.5" text-anchor="middle" fill="#a7adad" textLength="11.5" lengthAdjust="spacingAndGlyphs">16</text><path d="M1303.5 1085 L1303.5 1092" stroke="#6a7070" stroke-width="1.2"/><circle cx="1303.5" cy="1100.4" r="8.6" fill="#050b0e" stroke="#8a9090" stroke-width="1.3"/><text x="1303.5" y="1104.65" font-family="Liberation Sans" font-size="12.5" text-anchor="middle" fill="#a7adad" textLength="11.5" lengthAdjust="spacingAndGlyphs">18</text><path d="M1341.8 1085 L1341.8 1092" stroke="#6a7070" stroke-width="1.2"/><circle cx="1341.8" cy="1100.4" r="8.6" fill="#050b0e" stroke="#8a9090" stroke-width="1.3"/><text x="1341.8" y="1104.65" font-family="Liberation Sans" font-size="12.5" text-anchor="middle" fill="#a7adad" textLength="11.5" lengthAdjust="spacingAndGlyphs">19</text><path d="M1418.7 1085 L1418.7 1092" stroke="#6a7070" stroke-width="1.2"/><circle cx="1418.7" cy="1100.4" r="8.6" fill="#050b0e" stroke="#8a9090" stroke-width="1.3"/><text x="1418.7" y="1104.65" font-family="Liberation Sans" font-size="12.5" text-anchor="middle" fill="#a7adad" textLength="11.5" lengthAdjust="spacingAndGlyphs">21</text><path d="M1500.4 1085 L1500.4 1092" stroke="#6a7070" stroke-width="1.2"/><circle cx="1500.4" cy="1100.4" r="8.6" fill="#050b0e" stroke="#8a9090" stroke-width="1.3"/><text x="1500.4" y="1104.65" font-family="Liberation Sans" font-size="12.5" text-anchor="middle" fill="#a7adad" textLength="11.5" lengthAdjust="spacingAndGlyphs">23</text><path d="M1566 1085 L1566 1092" stroke="#6a7070" stroke-width="1.2"/><circle cx="1566" cy="1100.4" r="8.6" fill="#050b0e" stroke="#8a9090" stroke-width="1.3"/><text x="1566" y="1104.65" font-family="Liberation Sans" font-size="12.5" text-anchor="middle" fill="#a7adad" textLength="11.5" lengthAdjust="spacingAndGlyphs">25</text><path d="M1641.8 1085 L1641.8 1092" stroke="#6a7070" stroke-width="1.2"/><circle cx="1641.8" cy="1100.4" r="8.6" fill="#050b0e" stroke="#8a9090" stroke-width="1.3"/><text x="1641.8" y="1104.65" font-family="Liberation Sans" font-size="12.5" text-anchor="middle" fill="#a7adad" textLength="11.5" lengthAdjust="spacingAndGlyphs">27</text></g></svg>
<svg class="b" style="left:0.00px;top:0.00px;" width="40" height="1439" viewBox="0 0 40 1439"><path d="M8 617.5 H28 M8 622.5 H28" stroke="#2e363c" stroke-width="1.6"/><path transform="translate(17.5 645.8)" d="M-7 3 L-3 -4 H5 L8 -1 L2 3 Z M-8 6 h10 M6 4 v4" fill="none" stroke="#222a30" stroke-width="1.4" stroke-linejoin="round" stroke-linecap="round"/><path transform="translate(17.5 677)" d="M-7 -2 h7 v7 h-7 Z M-3 -5 l5 -1 M3 4 a3 3 0 1 0 6 0 a3 3 0 1 0 -6 0" fill="none" stroke="#222a30" stroke-width="1.4" stroke-linejoin="round" stroke-linecap="round"/><path transform="translate(17.5 708)" d="M-7 -5 v4 M-9 -3 h4 M-3 -3 H9 M-7 3 v4 M-3 5 H9" fill="none" stroke="#222a30" stroke-width="1.4" stroke-linejoin="round" stroke-linecap="round"/><path transform="translate(17.5 739.5)" d="M-8 -5 V6 M8 -5 V6 M-8 -3 H8 M-8 4 H8" fill="none" stroke="#222a30" stroke-width="1.4" stroke-linejoin="round" stroke-linecap="round"/><path transform="translate(17.5 770.5)" d="M-8 -6 h6 v6 h-6 Z M-8 3 h6 v5 h-6 Z M3 -6 h5 v5 M3 3 l5 5" fill="none" stroke="#222a30" stroke-width="1.4" stroke-linejoin="round" stroke-linecap="round"/><path transform="translate(17.5 801.5)" d="M-8 -2 h8 v9 h-8 Z M1 -7 h7 v8 h-4 M5 3 v4" fill="none" stroke="#222a30" stroke-width="1.4" stroke-linejoin="round" stroke-linecap="round"/><path transform="translate(17.5 833)" d="M-8 -6 H8 V7 H-8 Z M-3 -6 V7 M1 -6 V7 M5 -6 V7 M-7 1 h3" fill="none" stroke="#222a30" stroke-width="1.4" stroke-linejoin="round" stroke-linecap="round"/><path transform="translate(17.5 864)" d="M-9 3 H-5 L-2 7 L2 -7 L5 2 H9" fill="none" stroke="#222a30" stroke-width="1.4" stroke-linejoin="round" stroke-linecap="round"/><path transform="translate(17.5 895)" d="M-8 -6 h5 l2 2 H8 V1 H-8 Z M-8 3 H8 V8 H-8 Z M-5 5.5 h6" fill="none" stroke="#222a30" stroke-width="1.4" stroke-linejoin="round" stroke-linecap="round"/><path transform="translate(17.5 926)" d="M-8 -5 H3 M-8 -5 V8 H7 V-1 M-4 4 L6 -7 L9 -4 L-1 6 Z" fill="none" stroke="#222a30" stroke-width="1.4" stroke-linejoin="round" stroke-linecap="round"/><path transform="translate(17.5 957)" d="M-7 4 L4 -7 L8 -3 L-3 8 Z M-2 1 l2 2 M1 -2 l2 2" fill="none" stroke="#222a30" stroke-width="1.4" stroke-linejoin="round" stroke-linecap="round"/><path d="M3 968.7 H32" stroke="#171e23" stroke-width="1.2"/><path d="M17.5 980 l3.6 1 l2.6 -1.2 l2.2 3.8 l-2 2 v3.4 l2 2 l-2.2 3.8 l-2.6 -1.2 l-3.6 1 l-3.6 -1 l-2.6 1.2 l-2.2 -3.8 l2 -2 v-3.4 l-2 -2 l2.2 -3.8 l2.6 1.2 Z" fill="none" stroke="#313a40" stroke-width="1.4" stroke-linejoin="round" stroke-linecap="round"/><circle cx="17.5" cy="988.7" r="3" fill="none" stroke="#313a40" stroke-width="1.4" stroke-linejoin="round" stroke-linecap="round"/></svg>
<svg class="b" style="left:0.00px;top:0.00px;" width="2560" height="400" viewBox="0 0 2560 400"><circle cx="2459" cy="311.5" r="51.7" fill="none" stroke="#222c33" stroke-width="13"/><rect x="2446.8" y="246.5" width="24.4" height="130" fill="#050b0e"/><rect x="2394" y="299.1" width="130" height="24.4" fill="#050b0e"/><rect x="2433" y="285.2" width="52.3" height="52.6" rx="9" fill="#b6b8b8"/><rect x="2441" y="293" width="36.5" height="34" fill="#a9abab"/><path d="M2433 328 L2441 327 H2477.5 L2485 328 V331 Q2485 337.8 2476 337.8 H2442 Q2433 337.8 2433 331 Z" fill="#bcbebe" opacity=".6"/></svg>
<span class="t" style="left:2459.00px;top:251.87px;font-size:19.50px;line-height:1;color:#5c686f;transform:translateX(-50%);-webkit-text-stroke:.5px #5c686f;">N</span>
<span class="t" style="left:2459.00px;top:352.87px;font-size:19.50px;line-height:1;color:#5c686f;transform:translateX(-50%);-webkit-text-stroke:.5px #5c686f;">S</span>
<span class="t" style="left:2407.80px;top:302.07px;font-size:19.50px;line-height:1;color:#5c686f;transform:translateX(-50%);-webkit-text-stroke:.5px #5c686f;">W</span>
<span class="t" style="left:2510.60px;top:302.07px;font-size:19.50px;line-height:1;color:#5c686f;transform:translateX(-50%);-webkit-text-stroke:.5px #5c686f;">E</span>
<span class="t" style="left:2459.30px;top:307.15px;font-size:8.30px;line-height:1;color:#5b5e60;letter-spacing:0.297px;transform:translateX(-50%);">TOP</span>
<div class="b" style="left:900.00px;top:348.00px;width:761.00px;height:737.50px;background:#f0f0f0;"></div>
<div class="b" style="left:900.00px;top:348.00px;width:761.00px;height:37.50px;background:#ffffff;"></div>
<div class="b" style="left:900.00px;top:347.50px;width:761.00px;height:1.20px;background:#9a9d9f;"></div>
<div class="b" style="left:899.80px;top:348.00px;width:1.20px;height:737.50px;background:#686c6e;"></div>
<div class="b" style="left:1660.00px;top:348.00px;width:1.00px;height:737.50px;background:#c8c8c8;"></div>
<svg class="b" style="left:909.00px;top:356.00px;" width="20" height="20" viewBox="0 0 20 20"><defs><linearGradient id="zg" x1="0" y1="0" x2="1" y2="1"><stop offset="0" stop-color="#3aa0ff"/><stop offset="1" stop-color="#1b62e0"/></linearGradient></defs><rect x="0" y="0" width="20" height="20" rx="4" fill="url(#zg)"/><path d="M5.3 15 L8.3 5.8" stroke="#fff" stroke-width="1.9" stroke-linecap="round" fill="none"/><path d="M8.5 14.3 L10.8 10 L13 13.3 L16 8.6" stroke="#fff" stroke-width="1.6" stroke-linecap="round" stroke-linejoin="round" fill="none"/></svg>
<span class="t" style="left:934.50px;top:358.74px;font-size:16.30px;line-height:1;color:#1a1a1a;letter-spacing:0.111px;">Coordinate Extraction</span>
<svg class="b" style="left:1633.00px;top:359.50px;" width="14" height="14" viewBox="0 0 14 14"><path d="M1 1 L13 13 M13 1 L1 13" stroke="#2a2a2a" stroke-width="1.4"/></svg>
<div class="b" style="left:910.60px;top:406.90px;width:379.40px;height:47.40px;border:1.3px solid #e0e0e0;box-sizing:border-box;border-radius:3.5px;"></div>
<div class="b" style="left:916.70px;top:399.70px;width:112.20px;height:14.00px;background:#f0f0f0;"></div>
<span class="t" style="left:919.70px;top:398.57px;font-size:14.60px;line-height:1;color:#1b1b1b;letter-spacing:-0.484px;transform-origin:left center;transform:scaleX(0.9574);">Extraction Method</span>
<svg class="b" style="left:929.00px;top:426.40px;" width="18" height="18" viewBox="0 0 18 18"><circle cx="9" cy="9" r="7.4" fill="#fff" stroke="#3a3a3a" stroke-width="1.3"/></svg>
<span class="t" style="left:949.60px;top:428.07px;font-size:14.60px;line-height:1;color:#1b1b1b;letter-spacing:-0.441px;transform-origin:left center;transform:scaleX(0.9687);">Point-by-point extraction</span>
<svg class="b" style="left:1139.40px;top:426.40px;" width="18" height="18" viewBox="0 0 18 18"><circle cx="9" cy="9" r="7.4" fill="#fff" stroke="#0a6fd0" stroke-width="1.4"/><circle cx="9" cy="9" r="4.3" fill="#0a6fd0"/></svg>
<span class="t" style="left:1159.20px;top:428.07px;font-size:14.60px;line-height:1;color:#1b1b1b;letter-spacing:-0.458px;transform-origin:left center;transform:scaleX(0.9623);">Batch extraction</span>
<div class="b" style="left:910.60px;top:474.80px;width:379.40px;height:46.80px;border:1.3px solid #e0e0e0;box-sizing:border-box;border-radius:3.5px;"></div>
<div class="b" style="left:916.70px;top:467.60px;width:143.30px;height:14.00px;background:#f0f0f0;"></div>
<span class="t" style="left:919.70px;top:466.47px;font-size:14.60px;line-height:1;color:#1b1b1b;letter-spacing:-0.464px;transform-origin:left center;transform:scaleX(0.9579);">Batch Object Extraction</span>
<div class="b" style="left:929.80px;top:494.95px;width:16.50px;height:16.50px;background:#ffffff;border:1.3px solid #454545;box-sizing:border-box;border-radius:1.8px;"></div>
<svg class="b" style="left:929.80px;top:494.95px;" width="16.5" height="16.5" viewBox="0 0 16.5 16.5"><path d="M3.8 8.6 L7 11.6 L12.8 4.8" fill="none" stroke="#333" stroke-width="1.35"/></svg>
<span class="t" style="left:949.60px;top:496.27px;font-size:14.60px;line-height:1;color:#1b1b1b;letter-spacing:-0.476px;transform-origin:left center;transform:scaleX(0.9885);">Block references</span>
<div class="b" style="left:1089.70px;top:494.95px;width:16.50px;height:16.50px;background:#ffffff;border:1.3px solid #454545;box-sizing:border-box;border-radius:1.8px;"></div>
<span class="t" style="left:1109.60px;top:496.27px;font-size:14.60px;line-height:1;color:#1b1b1b;letter-spacing:-0.511px;transform-origin:left center;transform:scaleX(0.9402);">Arcs</span>
<div class="b" style="left:1169.80px;top:494.95px;width:16.50px;height:16.50px;background:#ffffff;border:1.3px solid #454545;box-sizing:border-box;border-radius:1.8px;"></div>
<span class="t" style="left:1189.70px;top:496.27px;font-size:14.60px;line-height:1;color:#1b1b1b;letter-spacing:-0.575px;transform-origin:left center;transform:scaleX(0.9807);">Segments</span>
<div class="b" style="left:910.60px;top:543.00px;width:379.40px;height:318.10px;border:1.3px solid #e0e0e0;box-sizing:border-box;border-radius:3.5px;"></div>
<div class="b" style="left:916.70px;top:535.80px;width:129.60px;height:14.00px;background:#f0f0f0;"></div>
<span class="t" style="left:919.70px;top:534.67px;font-size:14.60px;line-height:1;color:#1b1b1b;letter-spacing:-0.477px;transform-origin:left center;transform:scaleX(0.9636);">Point Sorting Method</span>
<div class="b" style="left:931.50px;top:564.30px;width:70.00px;height:70.00px;background:#cce4f8;border:1.5px solid #6fa3d2;box-sizing:border-box;"></div>
<svg class="b" style="left:939.90px;top:572.70px;" width="53" height="53" viewBox="0 0 53 53"><rect x="1.5" y="1.5" width="50" height="50" fill="#dcecfb" stroke="#4b5057" stroke-width="3"/><circle cx="11.3" cy="11.3" r="3.8" fill="#eaf3fc" stroke="#4b5057" stroke-width="2"/><path d="M15.9 11.3 L33.8 11.3" stroke="#4b5057" stroke-width="2" fill="none"/><circle cx="41.8" cy="11.3" r="3.8" fill="#eaf3fc" stroke="#5b8cbd" stroke-width="2"/><path d="M38.542 14.5473 L14.558 38.4527" stroke="#5b8cbd" stroke-width="2" fill="none"/><circle cx="11.3" cy="41.7" r="3.8" fill="#eaf3fc" stroke="#5b8cbd" stroke-width="2"/><path d="M19.2 41.7 L38.2 41.7" stroke="#4b5057" stroke-width="2.2" fill="none"/><path d="M46.2 41.7 L35.7 47.3 L38.2 41.7 L35.7 36.1 Z" fill="#4b5057"/></svg>
<div class="b" style="left:1021.50px;top:564.30px;width:70.00px;height:70.00px;background:#e4e4e4;border:1px solid #d6d6d6;box-sizing:border-box;"></div>
<svg class="b" style="left:1029.90px;top:572.70px;" width="53" height="53" viewBox="0 0 53 53"><rect x="1.5" y="1.5" width="50" height="50" fill="#dcecfb" stroke="#4b5057" stroke-width="3"/><circle cx="11.3" cy="11.3" r="3.8" fill="#eaf3fc" stroke="#5b8cbd" stroke-width="2"/><path d="M19.2 11.3 L38.2 11.3" stroke="#4b5057" stroke-width="2.2" fill="none"/><path d="M46.2 11.3 L35.7 16.9 L38.2 11.3 L35.7 5.7 Z" fill="#4b5057"/><path d="M14.558 14.5473 L38.542 38.4527" stroke="#5b8cbd" stroke-width="2" fill="none"/><circle cx="41.8" cy="41.7" r="3.8" fill="#eaf3fc" stroke="#5b8cbd" stroke-width="2"/><circle cx="11.3" cy="41.7" r="3.8" fill="#eaf3fc" stroke="#4b5057" stroke-width="2"/><path d="M15.9 41.7 L33.8 41.7" stroke="#4b5057" stroke-width="2" fill="none"/></svg>
<div class="b" style="left:1111.50px;top:564.30px;width:70.00px;height:70.00px;background:#e4e4e4;border:1px solid #d6d6d6;box-sizing:border-box;"></div>
<svg class="b" style="left:1119.90px;top:572.70px;" width="53" height="53" viewBox="0 0 53 53"><rect x="1.5" y="1.5" width="50" height="50" fill="#dcecfb" stroke="#4b5057" stroke-width="3"/><circle cx="11.3" cy="11.3" r="3.8" fill="#eaf3fc" stroke="#5b8cbd" stroke-width="2"/><path d="M19.3 11.3 L37.2 11.3" stroke="#4b5057" stroke-width="2" fill="none"/><circle cx="41.8" cy="11.3" r="3.8" fill="#eaf3fc" stroke="#4b5057" stroke-width="2"/><path d="M14.558 14.5473 L38.542 38.4527" stroke="#5b8cbd" stroke-width="2" fill="none"/><circle cx="41.8" cy="41.7" r="3.8" fill="#eaf3fc" stroke="#5b8cbd" stroke-width="2"/><path d="M34 41.7 L15 41.7" stroke="#4b5057" stroke-width="2.2" fill="none"/><path d="M7 41.7 L17.5 36.1 L15 41.7 L17.5 47.3 Z" fill="#4b5057"/></svg>
<div class="b" style="left:1201.50px;top:564.30px;width:70.00px;height:70.00px;background:#e4e4e4;border:1px solid #d6d6d6;box-sizing:border-box;"></div>
<svg class="b" style="left:1209.90px;top:572.70px;" width="53" height="53" viewBox="0 0 53 53"><rect x="1.5" y="1.5" width="50" height="50" fill="#dcecfb" stroke="#4b5057" stroke-width="3"/><path d="M34 11.3 L15 11.3" stroke="#4b5057" stroke-width="2.2" fill="none"/><path d="M7 11.3 L17.5 5.7 L15 11.3 L17.5 16.9 Z" fill="#4b5057"/><circle cx="41.8" cy="11.3" r="3.8" fill="#eaf3fc" stroke="#5b8cbd" stroke-width="2"/><path d="M38.542 14.5473 L14.558 38.4527" stroke="#5b8cbd" stroke-width="2" fill="none"/><circle cx="11.3" cy="41.7" r="3.8" fill="#eaf3fc" stroke="#5b8cbd" stroke-width="2"/><path d="M19.3 41.7 L37.2 41.7" stroke="#4b5057" stroke-width="2" fill="none"/><circle cx="41.8" cy="41.7" r="3.8" fill="#eaf3fc" stroke="#4b5057" stroke-width="2"/></svg>
<div class="b" style="left:931.50px;top:654.30px;width:70.00px;height:70.00px;background:#e4e4e4;border:1px solid #d6d6d6;box-sizing:border-box;"></div>
<svg class="b" style="left:939.90px;top:662.70px;" width="53" height="53" viewBox="0 0 53 53"><rect x="1.5" y="1.5" width="50" height="50" fill="#dcecfb" stroke="#4b5057" stroke-width="3"/><circle cx="11.3" cy="11.3" r="3.8" fill="#eaf3fc" stroke="#4b5057" stroke-width="2"/><path d="M11.3 15.9 L11.3 33.7" stroke="#4b5057" stroke-width="2" fill="none"/><circle cx="11.3" cy="41.7" r="3.8" fill="#eaf3fc" stroke="#5b8cbd" stroke-width="2"/><path d="M14.558 38.4527 L38.542 14.5473" stroke="#5b8cbd" stroke-width="2" fill="none"/><circle cx="41.8" cy="11.3" r="3.8" fill="#eaf3fc" stroke="#5b8cbd" stroke-width="2"/><path d="M41.8 19.2 L41.8 38.2" stroke="#4b5057" stroke-width="2.2" fill="none"/><path d="M41.8 46.2 L36.2 35.7 L41.8 38.2 L47.4 35.7 Z" fill="#4b5057"/></svg>
<div class="b" style="left:1021.50px;top:654.30px;width:70.00px;height:70.00px;background:#e4e4e4;border:1px solid #d6d6d6;box-sizing:border-box;"></div>
<svg class="b" style="left:1029.90px;top:662.70px;" width="53" height="53" viewBox="0 0 53 53"><rect x="1.5" y="1.5" width="50" height="50" fill="#dcecfb" stroke="#4b5057" stroke-width="3"/><circle cx="11.3" cy="11.3" r="3.8" fill="#eaf3fc" stroke="#5b8cbd" stroke-width="2"/><path d="M11.3 19.2 L11.3 38.2" stroke="#4b5057" stroke-width="2.2" fill="none"/><path d="M11.3 46.2 L5.7 35.7 L11.3 38.2 L16.9 35.7 Z" fill="#4b5057"/><path d="M14.558 14.5473 L38.542 38.4527" stroke="#5b8cbd" stroke-width="2" fill="none"/><circle cx="41.8" cy="41.7" r="3.8" fill="#eaf3fc" stroke="#5b8cbd" stroke-width="2"/><circle cx="41.8" cy="11.3" r="3.8" fill="#eaf3fc" stroke="#4b5057" stroke-width="2"/><path d="M41.8 15.9 L41.8 33.7" stroke="#4b5057" stroke-width="2" fill="none"/></svg>
<div class="b" style="left:1111.50px;top:654.30px;width:70.00px;height:70.00px;background:#e4e4e4;border:1px solid #d6d6d6;box-sizing:border-box;"></div>
<svg class="b" style="left:1119.90px;top:662.70px;" width="53" height="53" viewBox="0 0 53 53"><rect x="1.5" y="1.5" width="50" height="50" fill="#dcecfb" stroke="#4b5057" stroke-width="3"/><circle cx="11.3" cy="11.3" r="3.8" fill="#eaf3fc" stroke="#5b8cbd" stroke-width="2"/><path d="M14.558 14.5473 L38.542 38.4527" stroke="#5b8cbd" stroke-width="2" fill="none"/><circle cx="41.8" cy="41.7" r="3.8" fill="#eaf3fc" stroke="#5b8cbd" stroke-width="2"/><circle cx="11.3" cy="41.7" r="3.8" fill="#eaf3fc" stroke="#4b5057" stroke-width="2"/><path d="M11.3 37.1 L11.3 19.3" stroke="#4b5057" stroke-width="2" fill="none"/><path d="M41.8 34 L41.8 15" stroke="#4b5057" stroke-width="2.2" fill="none"/><path d="M41.8 7 L47.4 17.5 L41.8 15 L36.2 17.5 Z" fill="#4b5057"/></svg>
<div class="b" style="left:1201.50px;top:654.30px;width:70.00px;height:70.00px;background:#e4e4e4;border:1px solid #d6d6d6;box-sizing:border-box;"></div>
<svg class="b" style="left:1209.90px;top:662.70px;" width="53" height="53" viewBox="0 0 53 53"><rect x="1.5" y="1.5" width="50" height="50" fill="#dcecfb" stroke="#4b5057" stroke-width="3"/><path d="M11.3 34 L11.3 15" stroke="#4b5057" stroke-width="2.2" fill="none"/><path d="M11.3 7 L16.9 17.5 L11.3 15 L5.7 17.5 Z" fill="#4b5057"/><circle cx="11.3" cy="41.7" r="3.8" fill="#eaf3fc" stroke="#5b8cbd" stroke-width="2"/><path d="M14.558 38.4527 L38.542 14.5473" stroke="#5b8cbd" stroke-width="2" fill="none"/><circle cx="41.8" cy="11.3" r="3.8" fill="#eaf3fc" stroke="#5b8cbd" stroke-width="2"/><circle cx="41.8" cy="41.7" r="3.8" fill="#eaf3fc" stroke="#4b5057" stroke-width="2"/><path d="M41.8 37.1 L41.8 19.3" stroke="#4b5057" stroke-width="2" fill="none"/></svg>
<div class="b" style="left:931.50px;top:744.30px;width:70.00px;height:70.00px;background:#e4e4e4;border:1px solid #d6d6d6;box-sizing:border-box;"></div>
<svg class="b" style="left:939.90px;top:752.70px;" width="53" height="53" viewBox="0 0 53 53"><rect x="1.3" y="1.3" width="50.4" height="50.4" fill="#dcecfb" stroke="#4b5057" stroke-width="2.6"/><path d="M26 1 V52 M1 26.2 H52" stroke="#4b5057" stroke-width="2.2"/><path d="M13 7.6 V20.6" stroke="#4b5057" stroke-width="2.3" fill="none"/><path d="M33.6 9 H42.6 Q44.4 9 44.4 10.8 V12.2 Q44.4 14 42.6 14 H36 Q34.4 14 34.4 15.6 V19.3 H45.2" stroke="#4b5057" stroke-width="2.2" fill="none"/><path d="M8 34.7 H16 Q17.8 34.7 17.8 36.5 V42.7 Q17.8 44.5 16 44.5 H8 M10.5 39.6 H17.5" stroke="#4b5057" stroke-width="2.2" fill="none"/><path d="M31 31.4 L40.6 33.6 L37.8 36.2 L46.6 44 L44.4 46.2 L35.8 38.2 L33.2 40.8 Z" fill="#4a7db3"/></svg>
<span class="t" style="left:930.40px;top:834.47px;font-size:14.60px;line-height:1;color:#1b1b1b;letter-spacing:-0.477px;transform-origin:left center;transform:scaleX(0.9597);">Left-to-Right and Up-to-Down</span>
<div class="b" style="left:910.60px;top:882.80px;width:379.40px;height:150.50px;border:1.3px solid #e0e0e0;box-sizing:border-box;border-radius:3.5px;"></div>
<div class="b" style="left:917.60px;top:875.60px;width:92.60px;height:14.00px;background:#f0f0f0;"></div>
<span class="t" style="left:920.60px;top:874.47px;font-size:14.60px;line-height:1;color:#1b1b1b;letter-spacing:-0.458px;">Table Settings</span>
<div class="b" style="left:929.80px;top:905.15px;width:16.50px;height:16.50px;background:#ffffff;border:1.3px solid #454545;box-sizing:border-box;border-radius:1.8px;"></div>
<svg class="b" style="left:929.80px;top:905.15px;" width="16.5" height="16.5" viewBox="0 0 16.5 16.5"><path d="M3.8 8.6 L7 11.6 L12.8 4.8" fill="none" stroke="#333" stroke-width="1.35"/></svg>
<span class="t" style="left:949.60px;top:906.27px;font-size:14.60px;line-height:1;color:#1b1b1b;letter-spacing:-0.483px;transform-origin:left center;transform:scaleX(0.9824);">Generate table</span>
<div class="b" style="left:949.60px;top:935.15px;width:16.50px;height:16.50px;background:#ffffff;border:1.3px solid #454545;box-sizing:border-box;border-radius:1.8px;"></div>
<span class="t" style="left:969.50px;top:936.27px;font-size:14.60px;line-height:1;color:#1b1b1b;letter-spacing:-0.499px;transform-origin:left center;transform:scaleX(0.9805);">Swap XY coordinate values</span>
<div class="b" style="left:949.60px;top:965.15px;width:16.50px;height:16.50px;background:#ffffff;border:1.3px solid #454545;box-sizing:border-box;border-radius:1.8px;"></div>
<svg class="b" style="left:949.60px;top:965.15px;" width="16.5" height="16.5" viewBox="0 0 16.5 16.5"><path d="M3.8 8.6 L7 11.6 L12.8 4.8" fill="none" stroke="#333" stroke-width="1.35"/></svg>
<span class="t" style="left:969.50px;top:966.27px;font-size:14.60px;line-height:1;color:#1b1b1b;letter-spacing:-0.445px;transform-origin:left center;transform:scaleX(0.9692);">Include Z coordinates in output table</span>
<span class="t" style="left:951.20px;top:998.47px;font-size:14.60px;line-height:1;color:#1b1b1b;letter-spacing:-0.383px;">Table style:</span>
<div class="b" style="left:1076.50px;top:994.20px;width:199.70px;height:23.20px;background:#e3e3e3;border:1px solid #b4b4b4;box-sizing:border-box;"></div>
<span class="t" style="left:1080.50px;top:998.97px;font-size:14.60px;line-height:1;color:#1b1b1b;letter-spacing:-0.518px;transform-origin:left center;transform:scaleX(0.9891);">Standard</span>
<svg class="b" style="left:1259.20px;top:1001.80px;" width="12" height="8" viewBox="0 0 12 8"><path d="M1.2 1.5 L6 6.3 L10.8 1.5" fill="none" stroke="#4a4a4a" stroke-width="1.3"/></svg>
<div class="b" style="left:1300.40px;top:407.25px;width:16.50px;height:16.50px;background:#ffffff;border:1.3px solid #454545;box-sizing:border-box;border-radius:1.8px;"></div>
<svg class="b" style="left:1300.40px;top:407.25px;" width="16.5" height="16.5" viewBox="0 0 16.5 16.5"><path d="M3.8 8.6 L7 11.6 L12.8 4.8" fill="none" stroke="#333" stroke-width="1.35"/></svg>
<span class="t" style="left:1320.00px;top:408.37px;font-size:14.60px;line-height:1;color:#1b1b1b;letter-spacing:-0.492px;transform-origin:left center;transform:scaleX(0.9738);">Marker points and numbering</span>
<div class="b" style="left:1300.10px;top:444.90px;width:350.40px;height:249.70px;border:1.3px solid #e0e0e0;box-sizing:border-box;border-radius:3.5px;"></div>
<div class="b" style="left:1306.50px;top:437.70px;width:123.30px;height:14.00px;background:#f0f0f0;"></div>
<span class="t" style="left:1309.50px;top:436.57px;font-size:14.60px;line-height:1;color:#1b1b1b;letter-spacing:-0.498px;transform-origin:left center;transform:scaleX(0.9716);">Numbering Settings</span>
<span class="t" style="left:1321.20px;top:470.47px;font-size:14.60px;line-height:1;color:#1b1b1b;letter-spacing:-0.476px;transform-origin:left center;transform:scaleX(0.9237);">Start number:</span>
<div class="b" style="left:1425.20px;top:465.70px;width:210.00px;height:26.60px;background:#ffffff;border:1.3px solid #7a7a7a;box-sizing:border-box;"></div>
<span class="t" style="left:1430.40px;top:470.30px;font-size:12.90px;line-height:1;color:#1b1b1b;">1</span>
<span class="t" style="left:1321.20px;top:510.47px;font-size:14.60px;line-height:1;color:#1b1b1b;letter-spacing:-0.479px;transform-origin:left center;transform:scaleX(0.9477);">Number prefix:</span>
<div class="b" style="left:1425.20px;top:506.00px;width:210.00px;height:26.60px;background:#ffffff;border:1.3px solid #7a7a7a;box-sizing:border-box;"></div>
<span class="t" style="left:1321.20px;top:550.57px;font-size:14.60px;line-height:1;color:#1b1b1b;letter-spacing:-0.469px;transform-origin:left center;transform:scaleX(0.9326);">Number suffix:</span>
<div class="b" style="left:1425.20px;top:545.80px;width:210.00px;height:26.60px;background:#ffffff;border:1.3px solid #7a7a7a;box-sizing:border-box;"></div>
<span class="t" style="left:1321.20px;top:586.37px;font-size:14.60px;line-height:1;color:#1b1b1b;letter-spacing:-0.483px;transform-origin:left center;transform:scaleX(0.9681);">Number position:</span>
<span class="t" style="left:1321.20px;top:620.37px;font-size:14.60px;line-height:1;color:#1b1b1b;letter-spacing:-0.435px;transform-origin:left center;transform:scaleX(0.9293);">Angle offset:</span>
<div class="b" style="left:1425.20px;top:615.40px;width:210.00px;height:26.60px;background:#ffffff;border:1.3px solid #7a7a7a;box-sizing:border-box;"></div>
<span class="t" style="left:1430.40px;top:620.00px;font-size:12.90px;line-height:1;color:#1b1b1b;">0</span>
<span class="t" style="left:1321.20px;top:660.37px;font-size:14.60px;line-height:1;color:#1b1b1b;letter-spacing:-0.439px;transform-origin:left center;transform:scaleX(0.9473);">Distance offset:</span>
<div class="b" style="left:1425.20px;top:655.60px;width:210.00px;height:26.60px;background:#ffffff;border:1.3px solid #7a7a7a;box-sizing:border-box;"></div>
<span class="t" style="left:1430.40px;top:660.20px;font-size:12.90px;line-height:1;color:#1b1b1b;">0</span>
<div class="b" style="left:1300.10px;top:721.10px;width:350.40px;height:102.50px;border:1.3px solid #e0e0e0;box-sizing:border-box;border-radius:3.5px;"></div>
<div class="b" style="left:1306.50px;top:713.90px;width:83.50px;height:14.00px;background:#f0f0f0;"></div>
<span class="t" style="left:1309.50px;top:712.77px;font-size:14.60px;line-height:1;color:#1b1b1b;letter-spacing:-0.450px;transform-origin:left center;transform:scaleX(0.9787);">Text Settings</span>
<span class="t" style="left:1321.20px;top:746.37px;font-size:14.60px;line-height:1;color:#1b1b1b;letter-spacing:-0.413px;transform-origin:left center;transform:scaleX(0.9677);">Text style:</span>
<div class="b" style="left:1425.20px;top:742.20px;width:210.00px;height:22.60px;background:#e3e3e3;border:1px solid #b4b4b4;box-sizing:border-box;"></div>
<span class="t" style="left:1429.20px;top:746.67px;font-size:14.60px;line-height:1;color:#1b1b1b;letter-spacing:-0.643px;transform-origin:left center;transform:scaleX(0.8672);">HZ2</span>
<svg class="b" style="left:1618.20px;top:749.50px;" width="12" height="8" viewBox="0 0 12 8"><path d="M1.2 1.5 L6 6.3 L10.8 1.5" fill="none" stroke="#4a4a4a" stroke-width="1.3"/></svg>
<span class="t" style="left:1321.20px;top:786.17px;font-size:14.60px;line-height:1;color:#1b1b1b;letter-spacing:-0.435px;transform-origin:left center;transform:scaleX(0.9420);">Text height:</span>
<div class="b" style="left:1425.20px;top:782.00px;width:210.00px;height:26.60px;background:#ffffff;border:1.3px solid #7a7a7a;box-sizing:border-box;"></div>
<span class="t" style="left:1430.40px;top:786.60px;font-size:12.90px;line-height:1;color:#1b1b1b;">250</span>
<div class="b" style="left:1300.10px;top:851.10px;width:350.40px;height:63.00px;border:1.3px solid #e0e0e0;box-sizing:border-box;border-radius:3.5px;"></div>
<div class="b" style="left:1306.50px;top:843.90px;width:91.50px;height:14.00px;background:#f0f0f0;"></div>
<span class="t" style="left:1309.50px;top:842.77px;font-size:14.60px;line-height:1;color:#1b1b1b;letter-spacing:-0.466px;transform-origin:left center;transform:scaleX(0.9687);">Layer Settings</span>
<span class="t" style="left:1321.20px;top:876.67px;font-size:14.60px;line-height:1;color:#1b1b1b;letter-spacing:-0.473px;transform-origin:left center;transform:scaleX(0.9451);">Layer:</span>
<div class="b" style="left:1425.20px;top:871.90px;width:210.00px;height:22.60px;background:#e3e3e3;border:1px solid #b4b4b4;box-sizing:border-box;"></div>
<span class="t" style="left:1429.20px;top:876.37px;font-size:14.60px;line-height:1;color:#1b1b1b;letter-spacing:-0.501px;transform-origin:left center;transform:scaleX(0.9543);">Use Current</span>
<svg class="b" style="left:1618.20px;top:879.20px;" width="12" height="8" viewBox="0 0 12 8"><path d="M1.2 1.5 L6 6.3 L10.8 1.5" fill="none" stroke="#4a4a4a" stroke-width="1.3"/></svg>
<div class="b" style="left:1300.10px;top:941.00px;width:350.40px;height:92.90px;border:1.3px solid #e0e0e0;box-sizing:border-box;border-radius:3.5px;"></div>
<div class="b" style="left:1306.50px;top:933.80px;width:95.80px;height:14.00px;background:#f0f0f0;"></div>
<span class="t" style="left:1309.50px;top:932.67px;font-size:14.60px;line-height:1;color:#1b1b1b;letter-spacing:-0.470px;transform-origin:left center;transform:scaleX(0.9443);">Output Settings</span>
<div class="b" style="left:1320.30px;top:963.35px;width:16.50px;height:16.50px;background:#ffffff;border:1.3px solid #454545;box-sizing:border-box;border-radius:1.8px;"></div>
<span class="t" style="left:1340.20px;top:964.47px;font-size:14.60px;line-height:1;color:#1b1b1b;letter-spacing:-0.406px;transform-origin:left center;transform:scaleX(0.9413);">Output to external file (.csv, .xlsx)</span>
<div class="b" style="left:1320.60px;top:991.40px;width:250.70px;height:27.20px;background:#f2f2f2;border:1px solid #d4d4d4;box-sizing:border-box;"></div>
<span class="t" style="left:1325.80px;top:995.76px;font-size:14.00px;line-height:1;color:#a9a9a9;letter-spacing:-0.321px;">C:\Users\zwsoft\Documents\cooext.csv</span>
<div class="b" style="left:1591.80px;top:992.70px;width:42.20px;height:25.30px;background:#cdcdcd;"></div>
<span class="t" style="left:1612.50px;top:1003.60px;font-size:9.00px;line-height:1;color:#b5b5b5;transform:translateX(-50%);">...</span>
<div class="b" style="left:1272.30px;top:1049.20px;width:97.20px;height:28.50px;background:#e3e3e3;border:2.3px solid #1b76d2;box-sizing:border-box;"></div>
<span class="t" style="left:1320.90px;top:1056.42px;font-size:15.00px;line-height:1;color:#1b1b1b;letter-spacing:-0.759px;transform-origin:center center;transform:translateX(-50%) scaleX(0.8840);">OK</span>
<div class="b" style="left:1411.70px;top:1049.20px;width:98.20px;height:28.50px;background:#e2e2e2;border:1px solid #b2b2b2;box-sizing:border-box;"></div>
<span class="t" style="left:1460.80px;top:1056.42px;font-size:15.00px;line-height:1;color:#1b1b1b;letter-spacing:-0.545px;transform-origin:center center;transform:translateX(-50%) scaleX(0.9664);">Cancel</span>
<div class="b" style="left:1551.80px;top:1049.20px;width:98.20px;height:28.50px;background:#e2e2e2;border:1px solid #b2b2b2;box-sizing:border-box;"></div>
<span class="t" style="left:1600.90px;top:1056.42px;font-size:15.00px;line-height:1;color:#1b1b1b;letter-spacing:-0.453px;transform:translateX(-50%);">Help</span>
<svg class="b" style="left:1155.50px;top:429.50px;" width="13" height="20" viewBox="0 0 13 20"><path d="M1 1 V15.5 L4.4 12.4 L6.9 18.3 L9.2 17.3 L6.7 11.6 L11.2 11.4 Z" fill="#fff" stroke="#222" stroke-width="1" stroke-linejoin="round"/></svg>
<svg class="b" style="left:1153.00px;top:594.00px;" width="252" height="252" viewBox="0 0 252 252"><circle cx="126" cy="126" r="125.8" fill="rgba(0,0,0,0.5)"/><path d="M86 70.5 L185 126 L86 184 Z" fill="#fff" stroke="#fff" stroke-width="16" stroke-linejoin="round"/></svg>
<div class="b" style="left:555.80px;top:1349.80px;width:163.00px;height:21.50px;background:#1a2027;"></div>
<span class="t" style="left:556.50px;top:1350.83px;font-size:20.00px;line-height:1;color:#a4a9ad;font-family:'Liberation Serif',serif;letter-spacing:-0.778px;transform-origin:left center;transform:scaleX(0.9084);">Command:</span>
<span class="t" style="left:646.60px;top:1350.83px;font-size:20.00px;line-height:1;color:#a4a9ad;font-family:'Liberation Serif',serif;letter-spacing:0.831px;">_cooext</span>
<div class="b" style="left:511.00px;top:1378.00px;width:1533.00px;height:30.50px;background:#20232b;border-radius:5px;"></div>
<div class="b" style="left:511.00px;top:1378.00px;width:46.00px;height:30.50px;background:#272b34;border-radius:5px 0 0 5px;"></div>
<svg class="b" style="left:527.00px;top:1383.80px;" width="20" height="20" viewBox="0 0 20 20"><g transform="translate(10 10)"><circle cx="6.10" cy="0.00" r="3.5" fill="#e6e8ea"/><circle cx="3.05" cy="5.28" r="3.5" fill="#e6e8ea"/><circle cx="-3.05" cy="5.28" r="3.5" fill="#e6e8ea"/><circle cx="-6.10" cy="0.00" r="3.5" fill="#e6e8ea"/><circle cx="-3.05" cy="-5.28" r="3.5" fill="#e6e8ea"/><circle cx="3.05" cy="-5.28" r="3.5" fill="#e6e8ea"/><circle r="6.4" fill="#e6e8ea"/><circle r="3.3" fill="#1e2129"/></g></svg>
<svg class="b" style="left:562.00px;top:1384.00px;" width="20" height="20" viewBox="0 0 20 20"><rect x=".4" y=".4" width="19.2" height="18.8" rx="1" fill="#b4b8bd"/><rect x="2" y="4.6" width="16" height="12.8" fill="#7d838a"/><path d="M4.2 7.6 L7.6 10.6 L4.2 13.6 M9 14 H15" stroke="#d9dcde" stroke-width="1.3" fill="none"/></svg>
<svg class="b" style="left:2019.50px;top:1389.50px;" width="14" height="9" viewBox="0 0 14 9"><path d="M1 8 L7 1 L13 8 Z" fill="#d6d9dc"/></svg>
<div class="b" style="left:0.00px;top:1410.20px;width:2560.00px;height:1.30px;background:#121a1e;"></div>
<svg class="b" style="left:19.00px;top:1416.00px;" width="20" height="16" viewBox="0 0 20 16"><path d="M1.5 9.6 L4.8 4.2 L8.1 9.6 Z" fill="#d0d4d7"/><path d="M11.5 3.6 H18.5 M11.5 8.6 H18.5" stroke="#9ea3a8" stroke-width="1.5"/><path d="M1.5 13.8 H18.5" stroke="#5d6368" stroke-width="1.4"/></svg>
<div class="b" style="left:58.80px;top:1413.30px;width:83.50px;height:23.00px;background:#343945;border-radius:5px;"></div>
<span class="t" style="left:101.20px;top:1417.54px;font-size:16.30px;line-height:1;color:#f3f4f5;font-weight:700;letter-spacing:0.367px;transform:translateX(-50%);">Model</span>
<div class="b" style="left:152.00px;top:1414.00px;width:105.00px;height:20.50px;background:#010101;"></div>
<div class="b" style="left:271.30px;top:1418.00px;width:1.40px;height:14.00px;background:#2c3238;"></div>
<div class="b" style="left:0.00px;top:1437.20px;width:2560.00px;height:2.00px;background:#53585b;"></div>
<div class="b" style="left:2032.30px;top:1413.30px;width:24.50px;height:23.00px;background:#353a45;border-radius:3px;"></div>
<div class="b" style="left:2061.30px;top:1413.30px;width:24.90px;height:23.00px;background:#353a45;border-radius:3px;"></div>
<div class="b" style="left:2090.60px;top:1413.30px;width:24.40px;height:23.00px;background:#353a45;border-radius:3px;"></div>
<div class="b" style="left:2148.00px;top:1413.30px;width:25.00px;height:23.00px;background:#353a45;border-radius:3px;"></div>
<div class="b" style="left:2206.40px;top:1413.30px;width:25.20px;height:23.00px;background:#353a45;border-radius:3px;"></div>
<svg class="b" style="left:2005.00px;top:1414.80px;" width="20" height="20" viewBox="0 0 20 20"><path d="M2 2 V18 H18" stroke="#8d9399" stroke-width="1.8" fill="none"/><path d="M2 11 H9 V18" stroke="#2f7fe0" stroke-width="1.6" fill="none"/></svg>
<svg class="b" style="left:2034.50px;top:1414.80px;" width="20" height="20" viewBox="0 0 20 20"><circle cx="10" cy="10" r="7.6" stroke="#d8dbde" stroke-width="1.8" fill="none"/><path d="M10 10 L16.5 6 A7.6 7.6 0 0 1 17.6 10 Z" fill="#2f7fe0"/><path d="M10 10 H17.6" stroke="#d8dbde" stroke-width="1.4"/></svg>
<svg class="b" style="left:2063.50px;top:1414.80px;" width="20" height="20" viewBox="0 0 20 20"><path d="M11 2 H18 V18 H2 V11" stroke="#d8dbde" stroke-width="1.8" fill="none"/><rect x="2" y="2" width="6.5" height="6.5" fill="#2f7fe0"/></svg>
<svg class="b" style="left:2092.80px;top:1414.80px;" width="20" height="20" viewBox="0 0 20 20"><path d="M2 18 H17 M4 17 L17 2" stroke="#8d9399" stroke-width="1.7" fill="none"/><rect x="7" y="8" width="5.5" height="5.5" fill="none" stroke="#2f7fe0" stroke-width="1.6"/></svg>
<svg class="b" style="left:2122.00px;top:1414.80px;" width="20" height="20" viewBox="0 0 20 20"><path d="M4 1 V19 M1 16 H19 M4 16 L14 6" stroke="#8d9399" stroke-width="1.6" fill="none"/><path d="M15 1 L12 6.5 H15 L13 11 L18.5 5 H15.5 L17.5 1 Z" fill="#e8a63a"/></svg>
<svg class="b" style="left:2150.50px;top:1414.80px;" width="20" height="20" viewBox="0 0 20 20"><path d="M5.5 1 V11 M.5 6 H10.5" stroke="#d8dbde" stroke-width="1.8"/><rect x="8" y="10.5" width="11" height="7" rx="1.5" fill="none" stroke="#2f7fe0" stroke-width="1.7"/></svg>
<svg class="b" style="left:2180.00px;top:1414.80px;" width="20" height="20" viewBox="0 0 20 20"><path d="M1 3 H18.5" stroke="#d8dbde" stroke-width="1.4"/><path d="M1 7.5 H18.5" stroke="#d8dbde" stroke-width="2.2"/><path d="M1 12.3 H18.5" stroke="#d8dbde" stroke-width="2.8"/><path d="M1 17.4 H18.5" stroke="#d8dbde" stroke-width="3.4"/></svg>
<svg class="b" style="left:2209.00px;top:1414.80px;" width="20" height="20" viewBox="0 0 20 20"><rect x="1.2" y="1.2" width="17.6" height="17.6" fill="#a6d2f7" stroke="#d8dbde" stroke-width="1.8"/></svg>
<svg class="b" style="left:2238.00px;top:1414.80px;" width="20" height="20" viewBox="0 0 20 20"><path d="M5 1 V11 M0 6 H10" stroke="#d8dbde" stroke-width="1.8"/><rect x="8" y="8" width="6" height="6" fill="none" stroke="#8d9399" stroke-width="1.4"/><rect x="11.5" y="11.5" width="7" height="7" fill="#0b1a33" stroke="#2f7fe0" stroke-width="1.6"/></svg>
<svg class="b" style="left:2265.50px;top:1414.80px;" width="20" height="20" viewBox="0 0 20 20"><rect x="1" y="11.5" width="8" height="7.5" fill="#d8dbde"/><path d="M8 12 V5 H12" stroke="#d8dbde" stroke-width="1.8" fill="none"/><rect x="12" y="1" width="7.5" height="7" fill="#2f7fe0"/></svg>
<svg class="b" style="left:2296.50px;top:1416.00px;" width="17" height="15" viewBox="0 0 17 15"><rect x="1" y="1.5" width="15" height="10.5" fill="none" stroke="#d8dbde" stroke-width="1.5"/><path d="M1 14 H16" stroke="#d8dbde" stroke-width="1.2"/><text x="8.5" y="9.8" font-family="Liberation Sans" font-weight="700" font-size="7.5" text-anchor="middle" fill="#d8dbde">0.0</text></svg>
<span class="t" style="left:2317.80px;top:1419.56px;font-size:14.00px;line-height:1;color:#6c7278;font-family:'Liberation Mono',monospace;letter-spacing:-0.588px;">Unitless</span>
<svg class="b" style="left:2393.50px;top:1418.00px;" width="13" height="9" viewBox="0 0 13 9"><path d="M.5 .8 H12.5 L6.5 8 Z" fill="#d8dbde"/></svg>
<svg class="b" style="left:2416.00px;top:1414.80px;" width="20" height="20" viewBox="0 0 20 20"><path d="M11 3 L18.5 18 H3.5 Z M11 9 V18 M7 18 L11 11 L15 18" stroke="#2f7fe0" stroke-width="1.8" fill="none" stroke-linejoin="round"/><path d="M5.5 .5 L2.5 5 H5 L3.5 8.5 L8 3.5 H5.5 L7 .5 Z" fill="#d8dbde"/></svg>
<svg class="b" style="left:2446.00px;top:1414.80px;" width="20" height="20" viewBox="0 0 20 20"><path d="M8 2.5 H2 V15 H8" stroke="#d8dbde" stroke-width="1.9" fill="none"/><circle cx="13" cy="4.5" r="2.6" fill="none" stroke="#d8dbde" stroke-width="1.6"/><path d="M13 11 L16.5 14.5 L13 18 L9.5 14.5 Z" fill="none" stroke="#2f7fe0" stroke-width="1.5"/></svg>
<svg class="b" style="left:2474.50px;top:1414.80px;" width="20" height="20" viewBox="0 0 20 20"><path d="M10 1 l3 .9 l2.4 -1 l2.6 4.4 l-1.8 1.9 v3.6 l1.8 1.9 l-2.6 4.4 l-2.4 -1 l-3 .9 l-3 -.9 l-2.4 1 l-2.6 -4.4 l1.8 -1.9 v-3.6 l-1.8 -1.9 l2.6 -4.4 l2.4 1 Z" fill="none" stroke="#d8dbde" stroke-width="1.7" stroke-linejoin="round"/><circle cx="10" cy="10" r="3.1" fill="none" stroke="#d8dbde" stroke-width="1.7"/></svg>
<svg class="b" style="left:2503.50px;top:1414.80px;" width="20" height="20" viewBox="0 0 20 20"><path d="M2 2 L18 18 M18 2 L2 18" stroke="#d8dbde" stroke-width="2"/><path d="M1 6 V1 H6 M14 1 H19 V6 M19 14 V19 H14 M6 19 H1 V14" stroke="#d8dbde" stroke-width="1.6" fill="none"/></svg>
<svg class="b" style="left:2532.50px;top:1414.80px;" width="20" height="20" viewBox="0 0 20 20"><path d="M1 10 L6.5 3 L12 10 Z" fill="#2f7fe0"/><path d="M13 3.5 H19.5 M13 8.5 H19.5 M1 14 H19.5 M1 18.5 H19.5" stroke="#2f7fe0" stroke-width="1.8"/></svg>
</div></body></html>
